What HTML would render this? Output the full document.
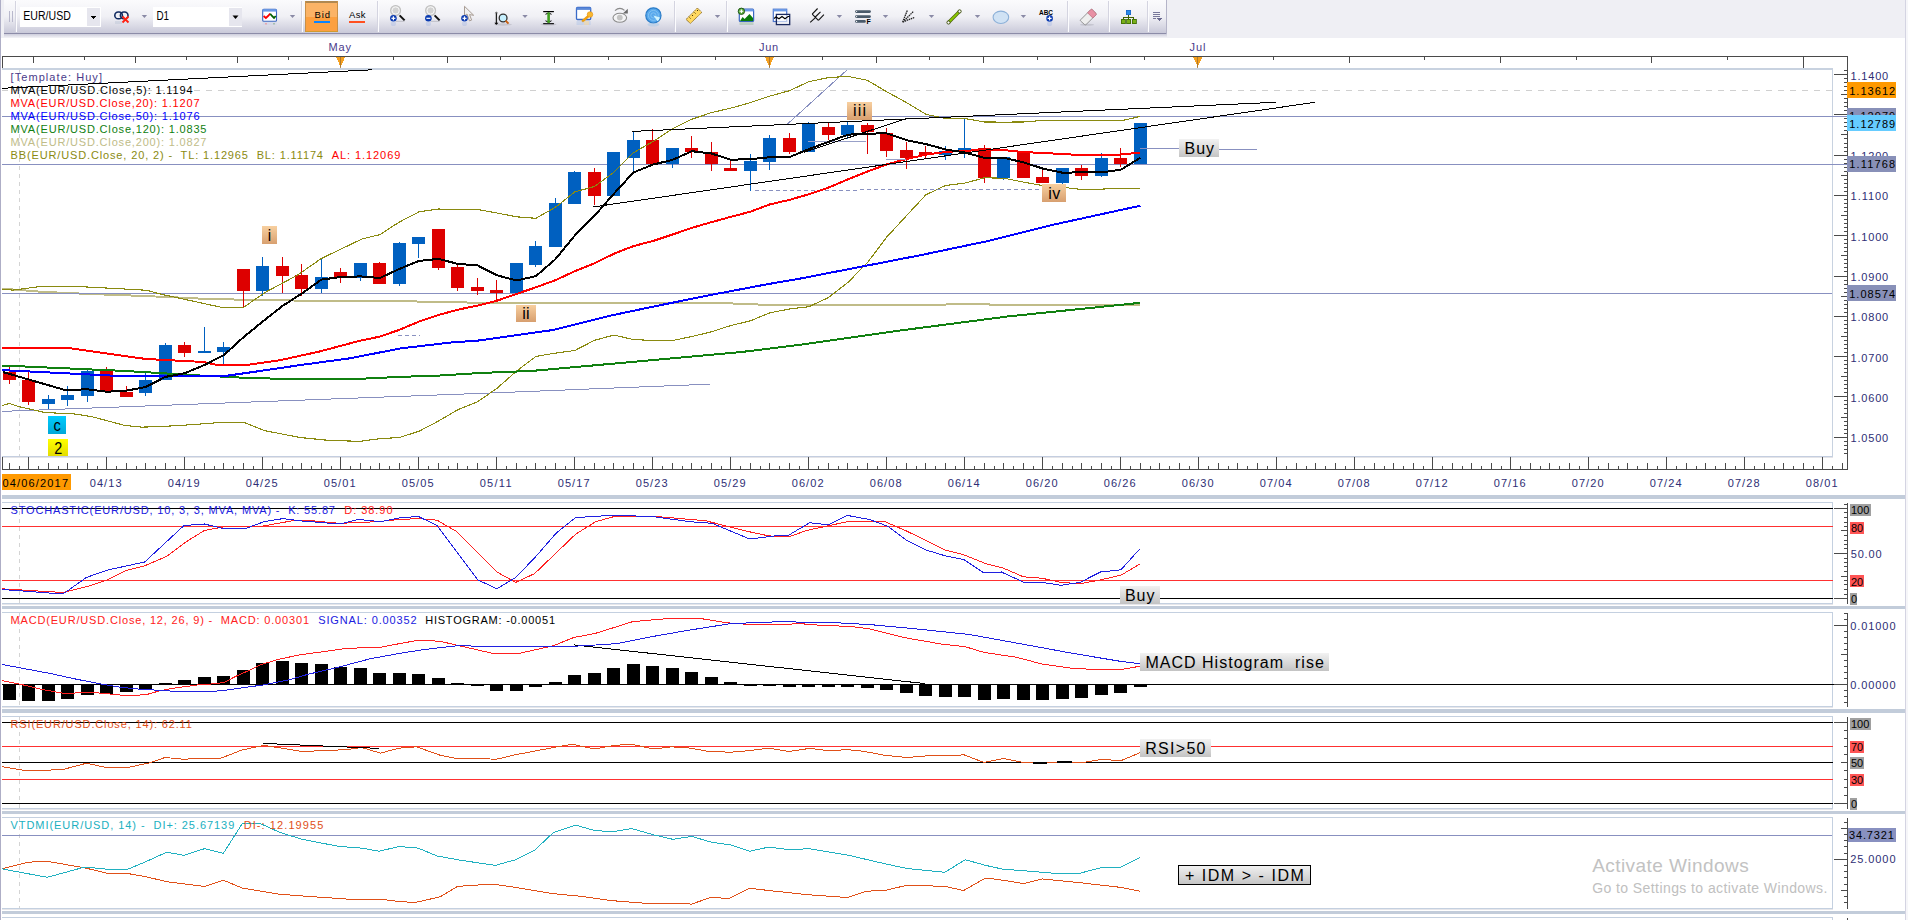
<!DOCTYPE html><html><head><meta charset="utf-8"><style>html,body{margin:0;padding:0;width:1908px;height:920px;overflow:hidden;background:#fff}svg{display:block}text{font-family:"Liberation Sans",sans-serif;white-space:pre}</style></head><body><svg width="1908" height="920" viewBox="0 0 1908 920" shape-rendering="crispEdges"><rect x="0.0" y="0.0" width="1908.0" height="920.0" fill="#ffffff" /><rect x="0.0" y="0.0" width="1908.0" height="38.0" fill="#efeff4" /><rect x="0.0" y="0.0" width="1.2" height="920.0" fill="#aeaec6" /><rect x="1905.0" y="0.0" width="1.0" height="920.0" fill="#d4d4e2" /><rect x="1906.0" y="0.0" width="2.0" height="920.0" fill="#f6f6f9" /><defs><linearGradient id="tb" x1="0" y1="0" x2="0" y2="1"><stop offset="0" stop-color="#fbfbfd"/><stop offset="0.5" stop-color="#f0f0f5"/><stop offset="1" stop-color="#c9c9d9"/></linearGradient><linearGradient id="lbl" x1="0" y1="0" x2="0" y2="1"><stop offset="0" stop-color="#f2f2f2"/><stop offset="1" stop-color="#c4c4c4"/></linearGradient><linearGradient id="wv" x1="0" y1="0" x2="0" y2="1"><stop offset="0" stop-color="#f8d0a0"/><stop offset="1" stop-color="#d8a070"/></linearGradient><linearGradient id="cy" x1="0" y1="0" x2="0" y2="1"><stop offset="0" stop-color="#00ccff"/><stop offset="1" stop-color="#00a8d8"/></linearGradient><linearGradient id="yl" x1="0" y1="0" x2="0" y2="1"><stop offset="0" stop-color="#ffff00"/><stop offset="1" stop-color="#e4dc00"/></linearGradient><clipPath id="clp"><rect x="2" y="0" width="1831" height="920"/></clipPath><linearGradient id="shd" x1="0" y1="0" x2="0" y2="1"><stop offset="0" stop-color="#c8c8d8"/><stop offset="1" stop-color="#efeff4"/></linearGradient></defs><rect x="4.0" y="33.5" width="1163.0" height="4.0" fill="url(#shd)" /><rect x="4.0" y="0.0" width="1163.0" height="33.0" fill="url(#tb)" /><rect x="4.0" y="33.0" width="1163.0" height="1.0" fill="#8c8ca8" /><rect x="1166.0" y="0.0" width="1.0" height="34.0" fill="#b4b4c8" /><rect x="7.5" y="11.0" width="0.8" height="11.0" fill="#b8b8cc" /><rect x="9.0" y="11.0" width="0.8" height="11.0" fill="#b8b8cc" /><rect x="10.5" y="11.0" width="0.8" height="11.0" fill="#b8b8cc" /><rect x="12.0" y="11.0" width="0.8" height="11.0" fill="#b8b8cc" /><rect x="15.0" y="1.0" width="1.0" height="31.0" fill="#d4d4e0" /><rect x="16.0" y="1.0" width="1.0" height="31.0" fill="#fcfcfe" /><rect x="20.0" y="7.0" width="81.0" height="20.0" fill="#ffffff" /><rect x="87.0" y="8.0" width="13.0" height="18.0" fill="#e6e6ee" /><path d="M90.5,15.5 L96.5,15.5 L93.5,19 Z" fill="#000"/><text x="23.3" y="20.3" fill="#000" font-size="12.5"  textLength="47.5" lengthAdjust="spacingAndGlyphs">EUR/USD</text><g shape-rendering="geometricPrecision"><g fill="none" stroke="#102a60" stroke-width="1.6"><rect x="114.8" y="12" width="7.6" height="6.8" rx="3.4"/><rect x="120.4" y="12" width="7.6" height="6.8" rx="3.4"/></g><path d="M122.5,16.5 L128.5,22.5 M128.5,16.5 L122.5,22.5" stroke="#ff2010" stroke-width="1.8"/><rect x="115" y="21" width="7" height="3" fill="#c0c8d8" opacity="0.5"/><path d="M141.7,15 L147.1,15 L144.4,18 Z" fill="#8a8aa6"/><rect x="153.0" y="7.0" width="89.0" height="20.0" fill="#ffffff" /><rect x="229.0" y="8.0" width="13.0" height="18.0" fill="#e6e6ee" /><path d="M232.5,15.5 L238.5,15.5 L235.5,19 Z" fill="#000"/><text x="156.4" y="20.3" fill="#000" font-size="12.5"  textLength="12.6" lengthAdjust="spacingAndGlyphs">D1</text><rect x="262.7" y="9.3" width="13.8" height="12" rx="1" fill="#fff" stroke="#3a66c0" stroke-width="1.1"/><rect x="262.7" y="9.3" width="13.8" height="2.3" fill="#6a9ae8" /><polyline points="263.6,16 265.9,18 268,16 270.2,13.7" fill="none" stroke="#ff0000" stroke-width="1.8"/><polyline points="270.2,13.7 272,16 274,18 275.7,16" fill="none" stroke="#006000" stroke-width="1.8"/><g opacity="0.25"><rect x="262.7" y="22" width="13.8" height="3" fill="#c0c8e8"/><rect x="265" y="23" width="2" height="1.5" fill="#f00"/><rect x="273" y="23" width="2" height="1.5" fill="#060"/></g><path d="M289.8,15 L295.2,15 L292.5,18 Z" fill="#8a8aa6"/></g><rect x="301.0" y="1.0" width="1.0" height="31.0" fill="#d4d4e0" /><rect x="302.0" y="1.0" width="1.0" height="31.0" fill="#fcfcfe" /><rect x="305.0" y="1.0" width="33.0" height="31.0" fill="#fca040" /><rect x="305.0" y="1.0" width="33.0" height="16.0" fill="#fbb366" /><rect x="305.0" y="1.0" width="33.0" height="2.0" fill="#b08850" /><rect x="305.0" y="1.0" width="1.0" height="31.0" fill="#c89048" /><rect x="337.0" y="1.0" width="1.0" height="31.0" fill="#c89048" /><rect x="305.0" y="31.0" width="33.0" height="1.0" fill="#d09a30" /><text x="314.5" y="18.0" fill="#000" font-size="9.5"  textLength="15.5" lengthAdjust="spacing">Bid</text><rect x="314.0" y="21.0" width="16.0" height="2.0" fill="#0a84ff" /><text x="349.0" y="18.0" fill="#000" font-size="9.5"  textLength="16.5" lengthAdjust="spacing">Ask</text><rect x="349.0" y="21.0" width="16.0" height="2.0" fill="#ff5020" /><rect x="377.0" y="1.0" width="1.0" height="31.0" fill="#d4d4e0" /><rect x="378.0" y="1.0" width="1.0" height="31.0" fill="#fcfcfe" /><g shape-rendering="geometricPrecision"><circle cx="395.6" cy="10.5" r="5" fill="#d8d8d8" stroke="#c0c0c0" stroke-width="1.1"/><circle cx="395.6" cy="10.5" r="3.6" fill="#d2d2d2" stroke="#f8f8f8" stroke-width="0.9"/><line x1="399.6" y1="15.4" x2="404.6" y2="20.4" stroke="#101010" stroke-width="2"/><line x1="395.5" y1="21.3" x2="404.5" y2="21.3" stroke="#a0a0a8" stroke-width="0.8" opacity="0.7"/><circle cx="393.4" cy="18.3" r="3.3" fill="#0a3ab0" shape-rendering="geometricPrecision"/><rect x="391.4" y="17.7" width="4" height="1.2" fill="#fff" shape-rendering="geometricPrecision"/><rect x="392.8" y="16.3" width="1.2" height="4" fill="#fff" shape-rendering="geometricPrecision"/><circle cx="393.4" cy="23.5" r="2.6" fill="#7a9ae0" opacity="0.22"/><circle cx="430.6" cy="10.5" r="5" fill="#d8d8d8" stroke="#c0c0c0" stroke-width="1.1"/><circle cx="430.6" cy="10.5" r="3.6" fill="#d2d2d2" stroke="#f8f8f8" stroke-width="0.9"/><line x1="434.6" y1="15.4" x2="439.6" y2="20.4" stroke="#101010" stroke-width="2"/><line x1="430.5" y1="21.3" x2="439.5" y2="21.3" stroke="#a0a0a8" stroke-width="0.8" opacity="0.7"/><circle cx="428.4" cy="18.3" r="3.3" fill="#0a3ab0" shape-rendering="geometricPrecision"/><rect x="426.4" y="17.7" width="4" height="1.2" fill="#fff" shape-rendering="geometricPrecision"/><circle cx="428.4" cy="23.5" r="2.6" fill="#7a9ae0" opacity="0.22"/><path d="M464.5,6.3 L464.5,15.8 L467,14 L469.5,20.9 L471.6,20.1 L469.6,14.6 L473.7,15.3 Z" fill="#f0f0f0" stroke="#a89c94" stroke-width="1"/><circle cx="464.5" cy="18.3" r="3.3" fill="#0a3ab0" shape-rendering="geometricPrecision"/><rect x="462.5" y="17.7" width="4" height="1.2" fill="#fff" shape-rendering="geometricPrecision"/><rect x="463.9" y="16.3" width="1.2" height="4" fill="#fff" shape-rendering="geometricPrecision"/><circle cx="464.5" cy="23.5" r="2.6" fill="#7a9ae0" opacity="0.22"/><line x1="496.4" y1="12.5" x2="496.4" y2="24.3" stroke="#202020" stroke-width="1.3"/><path d="M494.6,13.3 L498.2,13.3 L496.4,11.5 Z" fill="#707070"/><path d="M494.4,22.8 L498.4,22.8 L496.4,25 Z" fill="#000"/><circle cx="503.1" cy="18" r="3.9" fill="#c6f0ff" stroke="#303030" stroke-width="1.3"/><line x1="505.6" y1="20.6" x2="508.5" y2="23.6" stroke="#c86010" stroke-width="2"/><ellipse cx="503" cy="24.5" rx="9" ry="1.2" fill="#909098" opacity="0.3"/><path d="M522.3,15 L527.7,15 L525.0,18 Z" fill="#8a8aa6"/><rect x="543.2" y="11" width="10.7" height="1.2" fill="#000"/><rect x="543.2" y="23" width="10.7" height="1.3" fill="#000"/><path d="M545.5,14.3 Q548.5,11.5 551.5,14.3 M545.5,20.8 Q548.5,23.5 551.5,20.8" fill="none" stroke="#000" stroke-width="1"/><rect x="547.3" y="12.4" width="2.6" height="10.5" fill="#40a020"/><ellipse cx="548.5" cy="24.3" rx="8" ry="1.3" fill="#909098" opacity="0.3"/><rect x="576.5" y="7.5" width="14.2" height="12" rx="1" fill="#fff" stroke="#3a6ac8" stroke-width="1.3"/><rect x="576.5" y="7.5" width="14.2" height="2.4" fill="#5a88d8" /><line x1="582.8" y1="21" x2="588.5" y2="16" stroke="#f0a010" stroke-width="2.4" stroke-linecap="round"/><circle cx="590" cy="14.5" r="2.8" fill="#f8b830" stroke="#e89010" stroke-width="0.6"/><g opacity="0.25"><rect x="576.5" y="21" width="14.2" height="4" fill="#8ab0e8"/><rect x="584" y="21" width="5" height="4" fill="#f8c040"/></g><ellipse cx="619.8" cy="17.8" rx="6.8" ry="4.5" fill="#f4f4f6" stroke="#8c8c8c" stroke-width="1.1"/><circle cx="619.8" cy="17.6" r="2.9" fill="#c4c4c4"/><path d="M615,10.6 Q619.8,6.4 624.5,10.4" fill="none" stroke="#8a8a8a" stroke-width="1.2"/><path d="M622.8,13.4 L627.8,8.8 L627.8,13.4 Z" fill="#6a6a6a"/><circle cx="653.4" cy="15.4" r="7.6" fill="#58a8ec" stroke="#2a7cc8" stroke-width="1.2"/><circle cx="653.4" cy="15.4" r="5" fill="none" stroke="#90ccf4" stroke-width="0.7"/><circle cx="653.4" cy="15.4" r="2.6" fill="none" stroke="#90ccf4" stroke-width="0.7"/><path d="M653.4,15.4 L660,17.5 A7,7 0 0 1 657.5,21.3 Z" fill="#d0f4ff"/><ellipse cx="653.4" cy="24.5" rx="6" ry="2" fill="#80b8e8" opacity="0.3"/></g><rect x="674.0" y="1.0" width="1.0" height="31.0" fill="#d4d4e0" /><rect x="675.0" y="1.0" width="1.0" height="31.0" fill="#fcfcfe" /><g shape-rendering="geometricPrecision"><path d="M697.4,8 L701.8,12.4 L690.4,23.5 L686,19.4 Z" fill="#ffd860" stroke="#705010" stroke-width="0.9" stroke-dasharray="1,0.6"/><path d="M689.5,17.5 l1,1 M692,15 l1,1 M694.5,12.5 l1,1 M697,10 l1,1" stroke="#302000" stroke-width="0.9"/><path d="M714.8,15 L720.2,15 L717.5,18 Z" fill="#8a8aa6"/></g><rect x="726.0" y="1.0" width="1.0" height="31.0" fill="#d4d4e0" /><rect x="727.0" y="1.0" width="1.0" height="31.0" fill="#fcfcfe" /><g shape-rendering="geometricPrecision"><rect x="739.3" y="9.2" width="14.3" height="12.3" rx="1" fill="#fff" stroke="#3a66c0" stroke-width="1.2"/><rect x="739.3" y="9.2" width="14.3" height="2.2" fill="#6a9ae8" /><path d="M740,21 L742.6,16.9 L744.6,19 L749.5,14 L753,18 L753,21 Z" fill="#0a7a0a"/><circle cx="741.4" cy="11.3" r="3.2" fill="#60b040" stroke="#1a5010" stroke-width="0.9"/><path d="M739.6,11.3 h3.6 M741.4,9.5 v3.6" stroke="#fff" stroke-width="1.1"/><rect x="739.5" y="22" width="14" height="3" fill="#70a870" opacity="0.3"/><rect x="773.3" y="9.2" width="13.4" height="12.3" fill="#fff" stroke="#4a74cc" stroke-width="1.2"/><rect x="773.3" y="9.2" width="13.4" height="2.2" fill="#6a9ae8" /><rect x="776.4" y="14.4" width="13.3" height="10.2" fill="#fff" fill-opacity="0.6" stroke="#1a2a60" stroke-width="1.3"/><polyline points="774,18.5 776,17 779,18.8 782,16.5 785,18.8 788,16.5 789.5,16.5" fill="none" stroke="#000" stroke-width="1.1"/><path d="M810.2,22.4 L815.7,17.3 M812.2,14.2 L818.4,20.4 M812.2,14.2 L817.6,8.5 M815.3,17 L820.5,11.9 M818.4,20.4 L823.9,14.6" fill="none" stroke="#101010" stroke-width="1.1"/><path d="M836.7,15 L842.1,15 L839.4,18 Z" fill="#8a8aa6"/><rect x="855.1" y="10.2" width="15.8" height="2.7" rx="1.3" fill="#4a5a6a"/><circle cx="856.6" cy="11.5" r="0.6" fill="#fff"/><rect x="855.1" y="15.2" width="15.8" height="2.7" rx="1.3" fill="#4a5a6a"/><circle cx="856.6" cy="16.6" r="0.6" fill="#fff"/><rect x="855.1" y="20.0" width="10.7" height="2.7" rx="1.3" fill="#4a5a6a"/><circle cx="856.6" cy="21.4" r="0.6" fill="#fff"/><text x="866.6" y="23.8" fill="#000" font-size="7" font-weight="bold">F</text><path d="M882.8,15 L888.2,15 L885.5,18 Z" fill="#8a8aa6"/><path d="M902.6,22.1 L907.4,10.2 M902.6,22.1 L913.7,11.2 M902.6,22.1 L914.7,17.3" fill="none" stroke="#202020" stroke-width="1.3" stroke-dasharray="1.5,0.7"/><path d="M928.8,15 L934.2,15 L931.5,18 Z" fill="#8a8aa6"/><line x1="948.5" y1="22.5" x2="959.6" y2="11.4" stroke="#506010" stroke-width="3.4"/><line x1="948.5" y1="22.5" x2="959.6" y2="11.4" stroke="#88c800" stroke-width="2"/><circle cx="948.5" cy="22.5" r="1.6" fill="#fff" stroke="#405010" stroke-width="1"/><circle cx="959.6" cy="11.4" r="1.6" fill="#fff" stroke="#405010" stroke-width="1"/><path d="M974.8,15 L980.2,15 L977.5,18 Z" fill="#8a8aa6"/><ellipse cx="1000.9" cy="17.3" rx="7.8" ry="6.2" fill="#d0e2f4" stroke="#8cb0d8" stroke-width="1.1"/><path d="M1020.7,15 L1026.1,15 L1023.4,18 Z" fill="#8a8aa6"/><text x="1039.0" y="15.0" fill="#000" font-size="8" font-weight="bold" textLength="14.0" lengthAdjust="spacingAndGlyphs">ABC</text><circle cx="1049.6" cy="18.4" r="3.3" fill="#0a3ab0" shape-rendering="geometricPrecision"/><rect x="1047.6" y="17.8" width="4" height="1.2" fill="#fff" shape-rendering="geometricPrecision"/><rect x="1049.0" y="16.4" width="1.2" height="4" fill="#fff" shape-rendering="geometricPrecision"/><circle cx="1049.6" cy="23.5" r="2.6" fill="#7a9ae0" opacity="0.22"/></g><rect x="1067.0" y="1.0" width="1.0" height="31.0" fill="#d4d4e0" /><rect x="1068.0" y="1.0" width="1.0" height="31.0" fill="#fcfcfe" /><g shape-rendering="geometricPrecision"><path d="M1080.6,19.8 L1090.8,9.6 Q1091.5,9 1092.2,9.6 L1096,13.4 Q1096.6,14.1 1096,14.8 L1086,24.6 Q1085.3,25.2 1084.6,24.6 L1080.6,21 Q1080,20.4 1080.6,19.8 Z" fill="#eeeeee" stroke="#8a8a8a" stroke-width="0.9"/><path d="M1087.6,12.8 L1090.8,9.6 Q1091.5,9 1092.2,9.6 L1096,13.4 Q1096.6,14.1 1096,14.8 L1092.8,18 Z" fill="#e890a4" stroke="#c07080" stroke-width="0.8"/><ellipse cx="1087" cy="24.8" rx="7" ry="1" fill="#909098" opacity="0.3"/></g><rect x="1108.0" y="1.0" width="1.0" height="31.0" fill="#d4d4e0" /><rect x="1109.0" y="1.0" width="1.0" height="31.0" fill="#fcfcfe" /><rect x="1126" y="10.1" width="4.8" height="4.6" rx="0.6" fill="#2a8ae8" stroke="#1a60c0" stroke-width="0.6"/><path d="M1128.4,14.7 V19.3 M1123.3,19.3 V17.2 H1133.7 V19.3" fill="none" stroke="#406000" stroke-width="1"/><rect x="1121.1" y="19.3" width="4.2" height="4.2" fill="#78b018" stroke="#3a6800" stroke-width="0.8"/><rect x="1126.7" y="19.3" width="4.2" height="4.2" fill="#78b018" stroke="#3a6800" stroke-width="0.8"/><rect x="1132.1" y="19.3" width="4.2" height="4.2" fill="#78b018" stroke="#3a6800" stroke-width="0.8"/><rect x="1147.0" y="1.0" width="1.0" height="31.0" fill="#d4d4e0" /><rect x="1148.0" y="1.0" width="1.0" height="31.0" fill="#fcfcfe" /><path d="M1153,12.5 h7 M1153,14.5 h7 M1153,16.5 h7 M1153,18.5 h3" stroke="#6a6a90" stroke-width="0.9"/><path d="M1157.2,18.2 L1161.8,18.2 L1159.5,20.9 Z" fill="#6a6a90"/><text x="328.4" y="51.0" fill="#4a3a8a" font-size="11"  textLength="22.6" lengthAdjust="spacing">May</text><text x="759.0" y="51.0" fill="#4a3a8a" font-size="11"  textLength="19.0" lengthAdjust="spacing">Jun</text><text x="1189.5" y="51.0" fill="#4a3a8a" font-size="11"  textLength="16.0" lengthAdjust="spacing">Jul</text><line x1="2.0" y1="56.5" x2="1848.0" y2="56.5" stroke="#4a4a4a" stroke-width="1" /><line x1="2.5" y1="56.0" x2="2.5" y2="69.5" stroke="#4a4a4a" stroke-width="1" /><line x1="1847.5" y1="56.0" x2="1847.5" y2="69.5" stroke="#4a4a4a" stroke-width="1" /><line x1="33.4" y1="56.5" x2="33.4" y2="62.5" stroke="#4a4a4a" stroke-width="1" /><line x1="84.7" y1="56.5" x2="84.7" y2="59.5" stroke="#4a4a4a" stroke-width="1" /><line x1="135.5" y1="56.5" x2="135.5" y2="62.5" stroke="#4a4a4a" stroke-width="1" /><line x1="186.8" y1="56.5" x2="186.8" y2="59.5" stroke="#4a4a4a" stroke-width="1" /><line x1="237.5" y1="56.5" x2="237.5" y2="62.5" stroke="#4a4a4a" stroke-width="1" /><line x1="288.8" y1="56.5" x2="288.8" y2="59.5" stroke="#4a4a4a" stroke-width="1" /><line x1="393.4" y1="56.5" x2="393.4" y2="59.5" stroke="#4a4a4a" stroke-width="1" /><line x1="447.2" y1="56.5" x2="447.2" y2="62.5" stroke="#4a4a4a" stroke-width="1" /><line x1="500.5" y1="56.5" x2="500.5" y2="59.5" stroke="#4a4a4a" stroke-width="1" /><line x1="554.3" y1="56.5" x2="554.3" y2="62.5" stroke="#4a4a4a" stroke-width="1" /><line x1="608.5" y1="56.5" x2="608.5" y2="59.5" stroke="#4a4a4a" stroke-width="1" /><line x1="661.4" y1="56.5" x2="661.4" y2="62.5" stroke="#4a4a4a" stroke-width="1" /><line x1="715.6" y1="56.5" x2="715.6" y2="59.5" stroke="#4a4a4a" stroke-width="1" /><line x1="822.7" y1="56.5" x2="822.7" y2="59.5" stroke="#4a4a4a" stroke-width="1" /><line x1="876.5" y1="56.5" x2="876.5" y2="62.5" stroke="#4a4a4a" stroke-width="1" /><line x1="929.3" y1="56.5" x2="929.3" y2="59.5" stroke="#4a4a4a" stroke-width="1" /><line x1="983.1" y1="56.5" x2="983.1" y2="62.5" stroke="#4a4a4a" stroke-width="1" /><line x1="1037.4" y1="56.5" x2="1037.4" y2="59.5" stroke="#4a4a4a" stroke-width="1" /><line x1="1090.7" y1="56.5" x2="1090.7" y2="62.5" stroke="#4a4a4a" stroke-width="1" /><line x1="1144.5" y1="56.5" x2="1144.5" y2="59.5" stroke="#4a4a4a" stroke-width="1" /><line x1="1273.3" y1="56.5" x2="1273.3" y2="59.5" stroke="#4a4a4a" stroke-width="1" /><line x1="1349.4" y1="56.5" x2="1349.4" y2="62.5" stroke="#4a4a4a" stroke-width="1" /><line x1="1424.5" y1="56.5" x2="1424.5" y2="59.5" stroke="#4a4a4a" stroke-width="1" /><line x1="1500.6" y1="56.5" x2="1500.6" y2="62.5" stroke="#4a4a4a" stroke-width="1" /><line x1="1576.7" y1="56.5" x2="1576.7" y2="59.5" stroke="#4a4a4a" stroke-width="1" /><line x1="1651.8" y1="56.5" x2="1651.8" y2="62.5" stroke="#4a4a4a" stroke-width="1" /><line x1="1727.4" y1="56.5" x2="1727.4" y2="59.5" stroke="#4a4a4a" stroke-width="1" /><line x1="1803.5" y1="56.5" x2="1803.5" y2="59.5" stroke="#4a4a4a" stroke-width="1" /><line x1="1803.5" y1="56.5" x2="1803.5" y2="68.0" stroke="#4a4a4a" stroke-width="1.1" /><path d="M336.1,57 L345.1,57 L340.6,67 Z" fill="#f4a020"/><line x1="340.6" y1="57.0" x2="340.6" y2="69.0" stroke="#a07030" stroke-width="0.8" /><path d="M764.9,57 L773.9,57 L769.4,67 Z" fill="#f4a020"/><line x1="769.4" y1="57.0" x2="769.4" y2="69.0" stroke="#a07030" stroke-width="0.8" /><path d="M1193.2,57 L1202.2,57 L1197.7,67 Z" fill="#f4a020"/><line x1="1197.7" y1="57.0" x2="1197.7" y2="69.0" stroke="#a07030" stroke-width="0.8" /><rect x="2.0" y="68.0" width="1831.0" height="2.0" fill="#c8d2e0" /><rect x="2.0" y="456.0" width="1831.0" height="1.0" fill="#c4cee0" /><rect x="2.0" y="457.0" width="1831.0" height="1.0" fill="#e4e4e8" /><rect x="1832.0" y="68.0" width="1.0" height="389.0" fill="#c8d2e0" /><line x1="1847.5" y1="69.0" x2="1847.5" y2="470.0" stroke="#4a4a4a" stroke-width="1" /><rect x="1843.5" y="70" width="4.5" height="1" fill="#4a4a4a"/><rect x="1833.5" y="74" width="14.5" height="1" fill="#4a4a4a"/><rect x="1843.5" y="78" width="4.5" height="1" fill="#4a4a4a"/><rect x="1843.5" y="82" width="4.5" height="1" fill="#4a4a4a"/><rect x="1843.5" y="86" width="4.5" height="1" fill="#4a4a4a"/><rect x="1843.5" y="90" width="4.5" height="1" fill="#4a4a4a"/><rect x="1840.5" y="94" width="7.5" height="1" fill="#4a4a4a"/><rect x="1843.5" y="98" width="4.5" height="1" fill="#4a4a4a"/><rect x="1843.5" y="102" width="4.5" height="1" fill="#4a4a4a"/><rect x="1843.5" y="106" width="4.5" height="1" fill="#4a4a4a"/><rect x="1843.5" y="110" width="4.5" height="1" fill="#4a4a4a"/><rect x="1833.5" y="114" width="14.5" height="1" fill="#4a4a4a"/><rect x="1843.5" y="118" width="4.5" height="1" fill="#4a4a4a"/><rect x="1843.5" y="122" width="4.5" height="1" fill="#4a4a4a"/><rect x="1843.5" y="126" width="4.5" height="1" fill="#4a4a4a"/><rect x="1843.5" y="130" width="4.5" height="1" fill="#4a4a4a"/><rect x="1840.5" y="134" width="7.5" height="1" fill="#4a4a4a"/><rect x="1843.5" y="138" width="4.5" height="1" fill="#4a4a4a"/><rect x="1843.5" y="143" width="4.5" height="1" fill="#4a4a4a"/><rect x="1843.5" y="147" width="4.5" height="1" fill="#4a4a4a"/><rect x="1843.5" y="151" width="4.5" height="1" fill="#4a4a4a"/><rect x="1833.5" y="155" width="14.5" height="1" fill="#4a4a4a"/><rect x="1843.5" y="159" width="4.5" height="1" fill="#4a4a4a"/><rect x="1843.5" y="163" width="4.5" height="1" fill="#4a4a4a"/><rect x="1843.5" y="167" width="4.5" height="1" fill="#4a4a4a"/><rect x="1843.5" y="171" width="4.5" height="1" fill="#4a4a4a"/><rect x="1840.5" y="175" width="7.5" height="1" fill="#4a4a4a"/><rect x="1843.5" y="179" width="4.5" height="1" fill="#4a4a4a"/><rect x="1843.5" y="183" width="4.5" height="1" fill="#4a4a4a"/><rect x="1843.5" y="187" width="4.5" height="1" fill="#4a4a4a"/><rect x="1843.5" y="191" width="4.5" height="1" fill="#4a4a4a"/><rect x="1833.5" y="195" width="14.5" height="1" fill="#4a4a4a"/><rect x="1843.5" y="199" width="4.5" height="1" fill="#4a4a4a"/><rect x="1843.5" y="203" width="4.5" height="1" fill="#4a4a4a"/><rect x="1843.5" y="207" width="4.5" height="1" fill="#4a4a4a"/><rect x="1843.5" y="211" width="4.5" height="1" fill="#4a4a4a"/><rect x="1840.5" y="215" width="7.5" height="1" fill="#4a4a4a"/><rect x="1843.5" y="219" width="4.5" height="1" fill="#4a4a4a"/><rect x="1843.5" y="223" width="4.5" height="1" fill="#4a4a4a"/><rect x="1843.5" y="227" width="4.5" height="1" fill="#4a4a4a"/><rect x="1843.5" y="231" width="4.5" height="1" fill="#4a4a4a"/><rect x="1833.5" y="235" width="14.5" height="1" fill="#4a4a4a"/><rect x="1843.5" y="239" width="4.5" height="1" fill="#4a4a4a"/><rect x="1843.5" y="243" width="4.5" height="1" fill="#4a4a4a"/><rect x="1843.5" y="247" width="4.5" height="1" fill="#4a4a4a"/><rect x="1843.5" y="251" width="4.5" height="1" fill="#4a4a4a"/><rect x="1840.5" y="255" width="7.5" height="1" fill="#4a4a4a"/><rect x="1843.5" y="259" width="4.5" height="1" fill="#4a4a4a"/><rect x="1843.5" y="263" width="4.5" height="1" fill="#4a4a4a"/><rect x="1843.5" y="267" width="4.5" height="1" fill="#4a4a4a"/><rect x="1843.5" y="271" width="4.5" height="1" fill="#4a4a4a"/><rect x="1833.5" y="276" width="14.5" height="1" fill="#4a4a4a"/><rect x="1843.5" y="280" width="4.5" height="1" fill="#4a4a4a"/><rect x="1843.5" y="284" width="4.5" height="1" fill="#4a4a4a"/><rect x="1843.5" y="288" width="4.5" height="1" fill="#4a4a4a"/><rect x="1843.5" y="292" width="4.5" height="1" fill="#4a4a4a"/><rect x="1840.5" y="296" width="7.5" height="1" fill="#4a4a4a"/><rect x="1843.5" y="300" width="4.5" height="1" fill="#4a4a4a"/><rect x="1843.5" y="304" width="4.5" height="1" fill="#4a4a4a"/><rect x="1843.5" y="308" width="4.5" height="1" fill="#4a4a4a"/><rect x="1843.5" y="312" width="4.5" height="1" fill="#4a4a4a"/><rect x="1833.5" y="316" width="14.5" height="1" fill="#4a4a4a"/><rect x="1843.5" y="320" width="4.5" height="1" fill="#4a4a4a"/><rect x="1843.5" y="324" width="4.5" height="1" fill="#4a4a4a"/><rect x="1843.5" y="328" width="4.5" height="1" fill="#4a4a4a"/><rect x="1843.5" y="332" width="4.5" height="1" fill="#4a4a4a"/><rect x="1840.5" y="336" width="7.5" height="1" fill="#4a4a4a"/><rect x="1843.5" y="340" width="4.5" height="1" fill="#4a4a4a"/><rect x="1843.5" y="344" width="4.5" height="1" fill="#4a4a4a"/><rect x="1843.5" y="348" width="4.5" height="1" fill="#4a4a4a"/><rect x="1843.5" y="352" width="4.5" height="1" fill="#4a4a4a"/><rect x="1833.5" y="356" width="14.5" height="1" fill="#4a4a4a"/><rect x="1843.5" y="360" width="4.5" height="1" fill="#4a4a4a"/><rect x="1843.5" y="364" width="4.5" height="1" fill="#4a4a4a"/><rect x="1843.5" y="368" width="4.5" height="1" fill="#4a4a4a"/><rect x="1843.5" y="372" width="4.5" height="1" fill="#4a4a4a"/><rect x="1840.5" y="376" width="7.5" height="1" fill="#4a4a4a"/><rect x="1843.5" y="380" width="4.5" height="1" fill="#4a4a4a"/><rect x="1843.5" y="384" width="4.5" height="1" fill="#4a4a4a"/><rect x="1843.5" y="388" width="4.5" height="1" fill="#4a4a4a"/><rect x="1843.5" y="392" width="4.5" height="1" fill="#4a4a4a"/><rect x="1833.5" y="396" width="14.5" height="1" fill="#4a4a4a"/><rect x="1843.5" y="400" width="4.5" height="1" fill="#4a4a4a"/><rect x="1843.5" y="404" width="4.5" height="1" fill="#4a4a4a"/><rect x="1843.5" y="408" width="4.5" height="1" fill="#4a4a4a"/><rect x="1843.5" y="413" width="4.5" height="1" fill="#4a4a4a"/><rect x="1840.5" y="417" width="7.5" height="1" fill="#4a4a4a"/><rect x="1843.5" y="421" width="4.5" height="1" fill="#4a4a4a"/><rect x="1843.5" y="425" width="4.5" height="1" fill="#4a4a4a"/><rect x="1843.5" y="429" width="4.5" height="1" fill="#4a4a4a"/><rect x="1843.5" y="433" width="4.5" height="1" fill="#4a4a4a"/><rect x="1833.5" y="437" width="14.5" height="1" fill="#4a4a4a"/><rect x="1843.5" y="441" width="4.5" height="1" fill="#4a4a4a"/><rect x="1843.5" y="445" width="4.5" height="1" fill="#4a4a4a"/><rect x="1843.5" y="449" width="4.5" height="1" fill="#4a4a4a"/><rect x="1843.5" y="453" width="4.5" height="1" fill="#4a4a4a"/><text x="1850.6" y="79.5" fill="#2e2e74" font-size="11"  textLength="37.6" lengthAdjust="spacing">1.1400</text><text x="1850.6" y="119.8" fill="#2e2e74" font-size="11"  textLength="37.6" lengthAdjust="spacing">1.1300</text><text x="1850.6" y="160.1" fill="#2e2e74" font-size="11"  textLength="37.6" lengthAdjust="spacing">1.1200</text><text x="1850.6" y="200.4" fill="#2e2e74" font-size="11"  textLength="37.6" lengthAdjust="spacing">1.1100</text><text x="1850.6" y="240.7" fill="#2e2e74" font-size="11"  textLength="37.6" lengthAdjust="spacing">1.1000</text><text x="1850.6" y="281.0" fill="#2e2e74" font-size="11"  textLength="37.6" lengthAdjust="spacing">1.0900</text><text x="1850.6" y="321.3" fill="#2e2e74" font-size="11"  textLength="37.6" lengthAdjust="spacing">1.0800</text><text x="1850.6" y="361.6" fill="#2e2e74" font-size="11"  textLength="37.6" lengthAdjust="spacing">1.0700</text><text x="1850.6" y="401.9" fill="#2e2e74" font-size="11"  textLength="37.6" lengthAdjust="spacing">1.0600</text><text x="1850.6" y="442.2" fill="#2e2e74" font-size="11"  textLength="37.6" lengthAdjust="spacing">1.0500</text><polyline points="2.0,288.6 41.9,291.8 88.0,293.9 125.8,295.3 167.7,297.0 209.6,299.1 299.8,300.6 400.0,301.2 460.0,302.3 500.0,303.4 730.0,303.4 760.0,304.6 946.0,304.6 950.0,303.5 985.0,303.5 990.0,304.6 1140.0,304.6" fill="none" stroke="#c0bc88" stroke-width="2" stroke-linejoin="round" clip-path="url(#clp)" /><line x1="2.0" y1="90.5" x2="1833.0" y2="90.5" stroke="#d0d0d0" stroke-width="1" stroke-dasharray="6,6"/><line x1="2.0" y1="116.4" x2="1847.0" y2="116.4" stroke="#8890c0" stroke-width="1" /><line x1="2.0" y1="164.2" x2="1847.0" y2="164.2" stroke="#8890c0" stroke-width="1" /><line x1="2.0" y1="293.5" x2="1832.0" y2="293.5" stroke="#8890c0" stroke-width="1" /><rect x="1847.0" y="82.0" width="49.0" height="16.0" fill="#ff9900" /><text x="1849.2" y="94.5" fill="#000" font-size="11"  textLength="46.0" lengthAdjust="spacing">1.13612</text><rect x="1847.0" y="107.5" width="49.0" height="16.0" fill="#8890b8" /><text x="1849.2" y="120.0" fill="#000" font-size="11"  textLength="46.0" lengthAdjust="spacing">1.12979</text><rect x="1847.0" y="115.0" width="49.0" height="16.0" fill="#66ccff" /><text x="1849.2" y="127.5" fill="#000" font-size="11"  textLength="46.0" lengthAdjust="spacing">1.12789</text><rect x="1847.0" y="156.0" width="49.0" height="15.5" fill="#8890b8" /><text x="1849.2" y="168.0" fill="#000" font-size="11"  textLength="46.0" lengthAdjust="spacing">1.11768</text><rect x="1847.0" y="285.0" width="49.0" height="16.0" fill="#8890b8" /><text x="1849.2" y="297.5" fill="#000" font-size="11"  textLength="46.0" lengthAdjust="spacing">1.08574</text><line x1="19.5" y1="70.0" x2="19.5" y2="456.0" stroke="#d4d4d4" stroke-width="1" stroke-dasharray="4,4"/><line x1="19.5" y1="503.0" x2="19.5" y2="603.0" stroke="#d4d4d4" stroke-width="1" stroke-dasharray="4,4"/><line x1="19.5" y1="613.0" x2="19.5" y2="706.0" stroke="#d4d4d4" stroke-width="1" stroke-dasharray="4,4"/><line x1="19.5" y1="716.0" x2="19.5" y2="808.0" stroke="#d4d4d4" stroke-width="1" stroke-dasharray="4,4"/><line x1="19.5" y1="818.0" x2="19.5" y2="908.0" stroke="#d4d4d4" stroke-width="1" stroke-dasharray="4,4"/><rect x="9" y="367" width="1" height="17" fill="#dd0000"/><rect x="3" y="372" width="13" height="8" fill="#dd0000"/><rect x="28" y="372" width="1" height="33" fill="#dd0000"/><rect x="22" y="380" width="13" height="22" fill="#dd0000"/><rect x="48" y="395" width="1" height="14" fill="#0060c0"/><rect x="42" y="399" width="13" height="5" fill="#0060c0"/><rect x="67" y="386" width="1" height="20" fill="#0060c0"/><rect x="61" y="395" width="13" height="5" fill="#0060c0"/><rect x="87" y="368" width="1" height="34" fill="#0060c0"/><rect x="81" y="371" width="13" height="25" fill="#0060c0"/><rect x="106" y="367" width="1" height="25" fill="#dd0000"/><rect x="100" y="371" width="13" height="21" fill="#dd0000"/><rect x="126" y="386" width="1" height="11" fill="#dd0000"/><rect x="120" y="392" width="13" height="5" fill="#dd0000"/><rect x="145" y="371" width="1" height="25" fill="#0060c0"/><rect x="139" y="380" width="13" height="13" fill="#0060c0"/><rect x="165" y="343" width="1" height="37" fill="#0060c0"/><rect x="159" y="345" width="13" height="35" fill="#0060c0"/><rect x="184" y="342" width="1" height="15" fill="#dd0000"/><rect x="178" y="345" width="13" height="8" fill="#dd0000"/><rect x="204" y="327" width="1" height="26" fill="#0060c0"/><rect x="198" y="351" width="13" height="2" fill="#0060c0"/><rect x="223" y="342" width="1" height="22" fill="#0060c0"/><rect x="217" y="347" width="13" height="5" fill="#0060c0"/><rect x="243" y="269" width="1" height="38" fill="#dd0000"/><rect x="237" y="269" width="13" height="22" fill="#dd0000"/><rect x="262" y="257" width="1" height="39" fill="#0060c0"/><rect x="256" y="266" width="13" height="25" fill="#0060c0"/><rect x="282" y="257" width="1" height="36" fill="#dd0000"/><rect x="276" y="266" width="13" height="10" fill="#dd0000"/><rect x="301" y="264" width="1" height="32" fill="#dd0000"/><rect x="295" y="275" width="13" height="14" fill="#dd0000"/><rect x="321" y="258" width="1" height="35" fill="#0060c0"/><rect x="315" y="277" width="13" height="12" fill="#0060c0"/><rect x="340" y="268" width="1" height="15" fill="#dd0000"/><rect x="334" y="272" width="13" height="6" fill="#dd0000"/><rect x="360" y="263" width="1" height="18" fill="#0060c0"/><rect x="354" y="263" width="13" height="15" fill="#0060c0"/><rect x="379" y="262" width="1" height="22" fill="#dd0000"/><rect x="373" y="263" width="13" height="21" fill="#dd0000"/><rect x="399" y="242" width="1" height="44" fill="#0060c0"/><rect x="393" y="243" width="13" height="41" fill="#0060c0"/><rect x="418" y="237" width="1" height="21" fill="#0060c0"/><rect x="412" y="237" width="13" height="7" fill="#0060c0"/><rect x="438" y="229" width="1" height="41" fill="#dd0000"/><rect x="432" y="229" width="13" height="39" fill="#dd0000"/><rect x="457" y="265" width="1" height="26" fill="#dd0000"/><rect x="451" y="267" width="13" height="21" fill="#dd0000"/><rect x="477" y="278" width="1" height="17" fill="#dd0000"/><rect x="471" y="287" width="13" height="4" fill="#dd0000"/><rect x="496" y="280" width="1" height="20" fill="#dd0000"/><rect x="490" y="290" width="13" height="3" fill="#dd0000"/><rect x="516" y="263" width="1" height="30" fill="#0060c0"/><rect x="510" y="263" width="13" height="30" fill="#0060c0"/><rect x="535" y="241" width="1" height="26" fill="#0060c0"/><rect x="529" y="246" width="13" height="19" fill="#0060c0"/><rect x="555" y="198" width="1" height="49" fill="#0060c0"/><rect x="549" y="203" width="13" height="44" fill="#0060c0"/><rect x="574" y="171" width="1" height="33" fill="#0060c0"/><rect x="568" y="172" width="13" height="32" fill="#0060c0"/><rect x="594" y="168" width="1" height="37" fill="#dd0000"/><rect x="588" y="172" width="13" height="24" fill="#dd0000"/><rect x="613" y="152" width="1" height="44" fill="#0060c0"/><rect x="607" y="152" width="13" height="44" fill="#0060c0"/><rect x="633" y="131" width="1" height="41" fill="#0060c0"/><rect x="627" y="140" width="13" height="18" fill="#0060c0"/><rect x="652" y="129" width="1" height="35" fill="#dd0000"/><rect x="646" y="140" width="13" height="24" fill="#dd0000"/><rect x="672" y="148" width="1" height="20" fill="#0060c0"/><rect x="666" y="148" width="13" height="16" fill="#0060c0"/><rect x="691" y="136" width="1" height="22" fill="#dd0000"/><rect x="685" y="148" width="13" height="4" fill="#dd0000"/><rect x="711" y="142" width="1" height="29" fill="#dd0000"/><rect x="705" y="152" width="13" height="12" fill="#dd0000"/><rect x="730" y="159" width="1" height="12" fill="#dd0000"/><rect x="724" y="168" width="13" height="3" fill="#dd0000"/><rect x="750" y="154" width="1" height="37" fill="#0060c0"/><rect x="744" y="161" width="13" height="10" fill="#0060c0"/><rect x="769" y="135" width="1" height="35" fill="#0060c0"/><rect x="763" y="138" width="13" height="24" fill="#0060c0"/><rect x="789" y="133" width="1" height="21" fill="#dd0000"/><rect x="783" y="138" width="13" height="14" fill="#dd0000"/><rect x="808" y="122" width="1" height="30" fill="#0060c0"/><rect x="802" y="124" width="13" height="28" fill="#0060c0"/><rect x="828" y="123" width="1" height="17" fill="#dd0000"/><rect x="822" y="127" width="13" height="8" fill="#dd0000"/><rect x="847" y="122" width="1" height="17" fill="#0060c0"/><rect x="841" y="125" width="13" height="10" fill="#0060c0"/><rect x="867" y="123" width="1" height="31" fill="#dd0000"/><rect x="861" y="125" width="13" height="7" fill="#dd0000"/><rect x="886" y="128" width="1" height="29" fill="#dd0000"/><rect x="880" y="133" width="13" height="18" fill="#dd0000"/><rect x="906" y="142" width="1" height="27" fill="#dd0000"/><rect x="900" y="150" width="13" height="8" fill="#dd0000"/><rect x="925" y="146" width="1" height="13" fill="#dd0000"/><rect x="919" y="152" width="13" height="3" fill="#dd0000"/><rect x="945" y="146" width="1" height="14" fill="#0060c0"/><rect x="939" y="151" width="13" height="4" fill="#0060c0"/><rect x="964" y="118" width="1" height="40" fill="#0060c0"/><rect x="958" y="148" width="13" height="3" fill="#0060c0"/><rect x="984" y="145" width="1" height="38" fill="#dd0000"/><rect x="978" y="148" width="13" height="30" fill="#dd0000"/><rect x="1003" y="157" width="1" height="23" fill="#0060c0"/><rect x="997" y="157" width="13" height="21" fill="#0060c0"/><rect x="1023" y="152" width="1" height="26" fill="#dd0000"/><rect x="1017" y="152" width="13" height="26" fill="#dd0000"/><rect x="1042" y="169" width="1" height="14" fill="#dd0000"/><rect x="1036" y="177" width="13" height="6" fill="#dd0000"/><rect x="1062" y="168" width="1" height="16" fill="#0060c0"/><rect x="1056" y="168" width="13" height="15" fill="#0060c0"/><rect x="1081" y="165" width="1" height="15" fill="#dd0000"/><rect x="1075" y="168" width="13" height="8" fill="#dd0000"/><rect x="1101" y="153" width="1" height="24" fill="#0060c0"/><rect x="1095" y="158" width="13" height="18" fill="#0060c0"/><rect x="1120" y="148" width="1" height="19" fill="#dd0000"/><rect x="1114" y="158" width="13" height="6" fill="#dd0000"/><rect x="1140" y="123" width="1" height="41" fill="#0060c0"/><rect x="1134" y="123" width="13" height="41" fill="#0060c0"/><line x1="480.0" y1="393.4" x2="709.5" y2="384.2" stroke="#8890c0" stroke-width="1" /><line x1="2.0" y1="411.4" x2="480.0" y2="393.4" stroke="#8890c0" stroke-width="1" /><line x1="787.5" y1="124.0" x2="847.0" y2="70.0" stroke="#8890c0" stroke-width="1" /><line x1="2.0" y1="88.3" x2="371.7" y2="69.8" stroke="#000" stroke-width="1" /><polyline points="2.0,289.3 12.6,290.1 44.0,286.1 77.6,286.5 117.4,288.6 146.8,290.3 161.4,294.3 222.2,307.5 243.2,307.5 266.2,291.8 297.7,275.0 321.3,258.5 362.0,239.0 379.9,234.6 399.4,222.0 418.9,211.9 438.4,209.0 457.9,209.6 477.4,209.4 496.9,213.0 516.4,216.8 535.9,218.3 555.4,207.3 574.9,191.9 594.4,186.5 613.9,172.3 633.4,152.8 652.9,141.6 672.4,128.7 691.9,119.2 711.4,112.6 730.9,108.1 750.4,102.6 769.9,96.1 789.4,90.7 808.9,81.7 828.4,77.6 847.9,76.4 867.4,80.3 886.9,91.9 906.4,102.5 925.9,114.3 945.4,118.5 964.9,118.5 984.4,122.0 1003.9,122.1 1023.4,122.0 1042.9,120.4 1062.4,120.8 1081.9,120.7 1101.4,120.6 1120.9,120.8 1140.4,116.4" fill="none" stroke="#8a8a10" stroke-width="1.1" stroke-linejoin="round" clip-path="url(#clp)" /><polyline points="2.0,405.5 9.2,403.5 19.7,406.8 45.9,412.7 72.0,413.6 91.7,416.6 124.5,425.4 141.5,427.1 154.7,426.8 174.3,425.8 194.0,424.5 222.8,422.3 243.8,422.3 265.0,430.7 300.0,437.5 330.0,440.5 360.0,441.3 379.9,438.7 399.4,437.5 418.9,431.3 438.4,421.1 457.9,409.7 477.4,401.9 496.9,388.4 516.4,371.2 535.9,356.4 555.4,353.1 574.9,350.5 594.4,340.3 613.9,335.1 633.4,339.5 652.9,340.5 672.4,340.6 691.9,336.5 711.4,331.8 730.9,325.5 750.4,320.8 769.9,312.8 789.4,309.0 808.9,306.7 828.4,297.6 847.9,282.4 867.4,262.7 886.9,236.9 906.4,215.8 925.9,194.8 945.4,185.5 964.9,183.1 984.4,177.8 1003.9,178.2 1023.4,182.1 1042.9,185.6 1062.4,187.2 1081.9,189.6 1101.4,189.1 1120.9,188.3 1140.4,188.8" fill="none" stroke="#8a8a10" stroke-width="1.1" stroke-linejoin="round" clip-path="url(#clp)" /><line x1="755.0" y1="190.2" x2="1062.0" y2="189.6" stroke="#8890c0" stroke-width="1" stroke-dasharray="4,3"/><line x1="398.0" y1="335.0" x2="420.0" y2="335.0" stroke="#8890c0" stroke-width="1" stroke-dasharray="4,3"/><polyline points="0.0,365.4 126.0,371.0 200.0,375.5 245.0,377.8 280.0,378.8 360.0,378.8 400.0,376.9 440.0,375.5 480.0,373.0 532.2,370.9 610.4,363.9 688.7,356.8 740.8,352.1 800.0,344.8 898.7,330.7 1007.4,316.5 1140.4,302.8" fill="none" stroke="#108010" stroke-width="2" stroke-linejoin="round" clip-path="url(#clp)" /><polyline points="0.0,370.0 120.0,376.0 200.0,376.5 225.0,376.0 260.0,371.0 300.0,365.1 350.0,358.3 400.0,348.5 450.0,342.6 480.0,340.4 553.0,330.0 610.4,315.6 662.6,304.7 714.7,294.2 766.9,284.3 800.0,278.6 920.4,255.2 985.7,241.5 1050.9,225.2 1140.4,205.7" fill="none" stroke="#0000ff" stroke-width="2" stroke-linejoin="round" clip-path="url(#clp)" /><polyline points="0.0,347.7 68.0,348.0 146.0,359.0 204.0,362.0 215.0,364.5 250.0,364.5 280.0,360.2 320.0,351.4 360.0,340.7 379.9,336.6 399.4,329.8 418.9,321.6 438.4,315.0 457.9,309.7 477.4,305.6 496.9,300.7 516.4,294.0 535.9,287.3 555.4,280.2 574.9,271.2 594.4,263.4 613.9,253.7 633.4,246.1 652.9,241.0 672.4,234.6 691.9,227.8 711.4,222.2 730.9,216.8 750.4,211.7 769.9,204.4 789.4,199.9 808.9,194.2 828.4,187.6 847.9,179.4 867.4,171.5 886.9,164.4 906.4,159.1 925.9,154.6 945.4,152.0 964.9,150.8 984.4,149.9 1003.9,150.1 1023.4,152.0 1042.9,153.0 1062.4,154.0 1081.9,155.2 1101.4,154.9 1120.9,154.5 1140.4,152.6" fill="none" stroke="#ff0000" stroke-width="2" stroke-linejoin="round" clip-path="url(#clp)" /><line x1="808.0" y1="141.3" x2="866.0" y2="141.3" stroke="#98a0c8" stroke-width="1" /><line x1="886.0" y1="160.0" x2="906.0" y2="159.6" stroke="#98a0c8" stroke-width="1" /><line x1="632.5" y1="131.4" x2="1275.9" y2="102.3" stroke="#000" stroke-width="1" /><line x1="593.5" y1="206.9" x2="1315.0" y2="102.3" stroke="#000" stroke-width="1" /><line x1="804.0" y1="152.4" x2="906.0" y2="118.6" stroke="#000" stroke-width="1" /><polyline points="2.7,372.0 65.0,390.0 87.4,389.3 106.9,391.7 126.4,390.7 145.9,386.9 165.4,376.9 184.9,373.2 204.4,365.0 223.9,355.1 243.4,337.3 262.9,321.4 282.4,306.0 301.9,293.5 321.4,279.6 340.9,277.0 360.4,276.4 379.9,278.0 399.4,268.9 418.9,260.9 438.4,258.9 457.9,263.9 477.4,265.3 496.9,275.3 516.4,280.5 535.9,276.1 555.4,259.2 574.9,235.4 594.4,215.9 613.9,193.7 633.4,172.5 652.9,164.6 672.4,159.9 691.9,151.2 711.4,153.5 730.9,159.7 750.4,159.2 769.9,157.2 789.4,157.1 808.9,149.1 828.4,141.9 847.9,134.7 867.4,133.6 886.9,133.4 906.4,140.1 925.9,144.1 945.4,149.4 964.9,152.5 984.4,157.9 1003.9,157.8 1023.4,162.3 1042.9,168.6 1062.4,172.7 1081.9,172.3 1101.4,172.5 1120.9,169.7 1140.4,157.7" fill="none" stroke="#000" stroke-width="2" stroke-linejoin="round" clip-path="url(#clp)" /><line x1="1140.0" y1="148.5" x2="1179.0" y2="148.5" stroke="#8890c0" stroke-width="1" /><line x1="1219.0" y1="149.4" x2="1257.0" y2="149.4" stroke="#8890c0" stroke-width="1" /><rect x="1179.0" y="139.0" width="40.0" height="18.0" fill="url(#lbl)" /><text x="1184.6" y="154.0" fill="#000" font-size="16"  textLength="29.4" lengthAdjust="spacing">Buy</text><rect x="262.0" y="226.0" width="15.0" height="18.0" fill="url(#wv)" /><text x="267.8" y="240.5" fill="#000" font-size="16"  textLength="3.4" lengthAdjust="spacingAndGlyphs">i</text><rect x="516.0" y="304.5" width="20.0" height="17.0" fill="url(#wv)" /><text x="522.2" y="318.7" fill="#000" font-size="16"  textLength="7.4" lengthAdjust="spacing">ii</text><rect x="847.0" y="102.0" width="25.0" height="17.7" fill="url(#wv)" /><text x="853.0" y="115.6" fill="#000" font-size="16"  textLength="13.0" lengthAdjust="spacing">iii</text><rect x="1042.0" y="184.0" width="24.0" height="17.7" fill="url(#wv)" /><text x="1048.3" y="198.8" fill="#000" font-size="16"  textLength="12.0" lengthAdjust="spacing">iv</text><rect x="48.0" y="416.0" width="18.0" height="18.0" fill="url(#cy)" /><text x="53.6" y="430.9" fill="#000" font-size="16"  textLength="7.3" lengthAdjust="spacingAndGlyphs">c</text><rect x="48.0" y="439.0" width="20.0" height="17.0" fill="url(#yl)" /><text x="54.2" y="453.9" fill="#000" font-size="16"  textLength="8.0" lengthAdjust="spacingAndGlyphs">2</text><text x="10.5" y="81.0" fill="#4a3a8a" font-size="11"  textLength="91.5" lengthAdjust="spacing">[Template: Huy]</text><text x="10.5" y="94.0" fill="#000" font-size="11"  textLength="182.0" lengthAdjust="spacing">MVA(EUR/USD.Close,5): 1.1194</text><text x="10.5" y="107.0" fill="#ff0000" font-size="11"  textLength="189.0" lengthAdjust="spacing">MVA(EUR/USD.Close,20): 1.1207</text><text x="10.5" y="120.0" fill="#0000ff" font-size="11"  textLength="189.0" lengthAdjust="spacing">MVA(EUR/USD.Close,50): 1.1076</text><text x="10.5" y="133.0" fill="#108010" font-size="11"  textLength="196.0" lengthAdjust="spacing">MVA(EUR/USD.Close,120): 1.0835</text><text x="10.5" y="146.0" fill="#c0bc88" font-size="11"  textLength="196.0" lengthAdjust="spacing">MVA(EUR/USD.Close,200): 1.0827</text><text x="10.5" y="159.0" fill="#8a8a10" font-size="11"  textLength="312.5" lengthAdjust="spacing">BB(EUR/USD.Close, 20, 2) -  TL: 1.12965  BL: 1.11174</text><text x="331.8" y="159.0" fill="#ff0000" font-size="11"  textLength="68.5" lengthAdjust="spacing">AL: 1.12069</text><line x1="2.0" y1="469.5" x2="1848.0" y2="469.5" stroke="#4a4a4a" stroke-width="1" /><line x1="2.5" y1="457.0" x2="2.5" y2="470.0" stroke="#4a4a4a" stroke-width="1" /><line x1="9.4" y1="463.0" x2="9.4" y2="469.5" stroke="#4a4a4a" stroke-width="1" /><line x1="19.1" y1="466.0" x2="19.1" y2="469.5" stroke="#4a4a4a" stroke-width="1" /><line x1="28.9" y1="456.5" x2="28.9" y2="469.5" stroke="#4a4a4a" stroke-width="1.1" /><line x1="38.6" y1="466.0" x2="38.6" y2="469.5" stroke="#4a4a4a" stroke-width="1" /><line x1="48.4" y1="463.0" x2="48.4" y2="469.5" stroke="#4a4a4a" stroke-width="1" /><line x1="58.1" y1="466.0" x2="58.1" y2="469.5" stroke="#4a4a4a" stroke-width="1" /><line x1="67.9" y1="463.0" x2="67.9" y2="469.5" stroke="#4a4a4a" stroke-width="1" /><line x1="77.7" y1="466.0" x2="77.7" y2="469.5" stroke="#4a4a4a" stroke-width="1" /><line x1="87.4" y1="463.0" x2="87.4" y2="469.5" stroke="#4a4a4a" stroke-width="1" /><line x1="97.2" y1="466.0" x2="97.2" y2="469.5" stroke="#4a4a4a" stroke-width="1" /><line x1="106.9" y1="456.5" x2="106.9" y2="469.5" stroke="#4a4a4a" stroke-width="1.1" /><line x1="116.7" y1="466.0" x2="116.7" y2="469.5" stroke="#4a4a4a" stroke-width="1" /><line x1="126.4" y1="463.0" x2="126.4" y2="469.5" stroke="#4a4a4a" stroke-width="1" /><line x1="136.2" y1="466.0" x2="136.2" y2="469.5" stroke="#4a4a4a" stroke-width="1" /><line x1="145.9" y1="463.0" x2="145.9" y2="469.5" stroke="#4a4a4a" stroke-width="1" /><line x1="155.7" y1="466.0" x2="155.7" y2="469.5" stroke="#4a4a4a" stroke-width="1" /><line x1="165.4" y1="463.0" x2="165.4" y2="469.5" stroke="#4a4a4a" stroke-width="1" /><line x1="175.2" y1="466.0" x2="175.2" y2="469.5" stroke="#4a4a4a" stroke-width="1" /><line x1="184.9" y1="456.5" x2="184.9" y2="469.5" stroke="#4a4a4a" stroke-width="1.1" /><line x1="194.7" y1="466.0" x2="194.7" y2="469.5" stroke="#4a4a4a" stroke-width="1" /><line x1="204.4" y1="463.0" x2="204.4" y2="469.5" stroke="#4a4a4a" stroke-width="1" /><line x1="214.2" y1="466.0" x2="214.2" y2="469.5" stroke="#4a4a4a" stroke-width="1" /><line x1="223.9" y1="463.0" x2="223.9" y2="469.5" stroke="#4a4a4a" stroke-width="1" /><line x1="233.7" y1="466.0" x2="233.7" y2="469.5" stroke="#4a4a4a" stroke-width="1" /><line x1="243.4" y1="463.0" x2="243.4" y2="469.5" stroke="#4a4a4a" stroke-width="1" /><line x1="253.2" y1="466.0" x2="253.2" y2="469.5" stroke="#4a4a4a" stroke-width="1" /><line x1="262.9" y1="456.5" x2="262.9" y2="469.5" stroke="#4a4a4a" stroke-width="1.1" /><line x1="272.6" y1="466.0" x2="272.6" y2="469.5" stroke="#4a4a4a" stroke-width="1" /><line x1="282.4" y1="463.0" x2="282.4" y2="469.5" stroke="#4a4a4a" stroke-width="1" /><line x1="292.1" y1="466.0" x2="292.1" y2="469.5" stroke="#4a4a4a" stroke-width="1" /><line x1="301.9" y1="463.0" x2="301.9" y2="469.5" stroke="#4a4a4a" stroke-width="1" /><line x1="311.6" y1="466.0" x2="311.6" y2="469.5" stroke="#4a4a4a" stroke-width="1" /><line x1="321.4" y1="463.0" x2="321.4" y2="469.5" stroke="#4a4a4a" stroke-width="1" /><line x1="331.1" y1="466.0" x2="331.1" y2="469.5" stroke="#4a4a4a" stroke-width="1" /><line x1="340.9" y1="456.5" x2="340.9" y2="469.5" stroke="#4a4a4a" stroke-width="1.1" /><line x1="350.6" y1="466.0" x2="350.6" y2="469.5" stroke="#4a4a4a" stroke-width="1" /><line x1="360.4" y1="463.0" x2="360.4" y2="469.5" stroke="#4a4a4a" stroke-width="1" /><line x1="370.1" y1="466.0" x2="370.1" y2="469.5" stroke="#4a4a4a" stroke-width="1" /><line x1="379.9" y1="463.0" x2="379.9" y2="469.5" stroke="#4a4a4a" stroke-width="1" /><line x1="389.6" y1="466.0" x2="389.6" y2="469.5" stroke="#4a4a4a" stroke-width="1" /><line x1="399.4" y1="463.0" x2="399.4" y2="469.5" stroke="#4a4a4a" stroke-width="1" /><line x1="409.1" y1="466.0" x2="409.1" y2="469.5" stroke="#4a4a4a" stroke-width="1" /><line x1="418.9" y1="456.5" x2="418.9" y2="469.5" stroke="#4a4a4a" stroke-width="1.1" /><line x1="428.6" y1="466.0" x2="428.6" y2="469.5" stroke="#4a4a4a" stroke-width="1" /><line x1="438.4" y1="463.0" x2="438.4" y2="469.5" stroke="#4a4a4a" stroke-width="1" /><line x1="448.1" y1="466.0" x2="448.1" y2="469.5" stroke="#4a4a4a" stroke-width="1" /><line x1="457.9" y1="463.0" x2="457.9" y2="469.5" stroke="#4a4a4a" stroke-width="1" /><line x1="467.6" y1="466.0" x2="467.6" y2="469.5" stroke="#4a4a4a" stroke-width="1" /><line x1="477.4" y1="463.0" x2="477.4" y2="469.5" stroke="#4a4a4a" stroke-width="1" /><line x1="487.1" y1="466.0" x2="487.1" y2="469.5" stroke="#4a4a4a" stroke-width="1" /><line x1="496.9" y1="456.5" x2="496.9" y2="469.5" stroke="#4a4a4a" stroke-width="1.1" /><line x1="506.6" y1="466.0" x2="506.6" y2="469.5" stroke="#4a4a4a" stroke-width="1" /><line x1="516.4" y1="463.0" x2="516.4" y2="469.5" stroke="#4a4a4a" stroke-width="1" /><line x1="526.1" y1="466.0" x2="526.1" y2="469.5" stroke="#4a4a4a" stroke-width="1" /><line x1="535.9" y1="463.0" x2="535.9" y2="469.5" stroke="#4a4a4a" stroke-width="1" /><line x1="545.6" y1="466.0" x2="545.6" y2="469.5" stroke="#4a4a4a" stroke-width="1" /><line x1="555.4" y1="463.0" x2="555.4" y2="469.5" stroke="#4a4a4a" stroke-width="1" /><line x1="565.1" y1="466.0" x2="565.1" y2="469.5" stroke="#4a4a4a" stroke-width="1" /><line x1="574.9" y1="456.5" x2="574.9" y2="469.5" stroke="#4a4a4a" stroke-width="1.1" /><line x1="584.6" y1="466.0" x2="584.6" y2="469.5" stroke="#4a4a4a" stroke-width="1" /><line x1="594.4" y1="463.0" x2="594.4" y2="469.5" stroke="#4a4a4a" stroke-width="1" /><line x1="604.1" y1="466.0" x2="604.1" y2="469.5" stroke="#4a4a4a" stroke-width="1" /><line x1="613.9" y1="463.0" x2="613.9" y2="469.5" stroke="#4a4a4a" stroke-width="1" /><line x1="623.6" y1="466.0" x2="623.6" y2="469.5" stroke="#4a4a4a" stroke-width="1" /><line x1="633.4" y1="463.0" x2="633.4" y2="469.5" stroke="#4a4a4a" stroke-width="1" /><line x1="643.1" y1="466.0" x2="643.1" y2="469.5" stroke="#4a4a4a" stroke-width="1" /><line x1="652.9" y1="456.5" x2="652.9" y2="469.5" stroke="#4a4a4a" stroke-width="1.1" /><line x1="662.6" y1="466.0" x2="662.6" y2="469.5" stroke="#4a4a4a" stroke-width="1" /><line x1="672.4" y1="463.0" x2="672.4" y2="469.5" stroke="#4a4a4a" stroke-width="1" /><line x1="682.1" y1="466.0" x2="682.1" y2="469.5" stroke="#4a4a4a" stroke-width="1" /><line x1="691.9" y1="463.0" x2="691.9" y2="469.5" stroke="#4a4a4a" stroke-width="1" /><line x1="701.6" y1="466.0" x2="701.6" y2="469.5" stroke="#4a4a4a" stroke-width="1" /><line x1="711.4" y1="463.0" x2="711.4" y2="469.5" stroke="#4a4a4a" stroke-width="1" /><line x1="721.1" y1="466.0" x2="721.1" y2="469.5" stroke="#4a4a4a" stroke-width="1" /><line x1="730.9" y1="456.5" x2="730.9" y2="469.5" stroke="#4a4a4a" stroke-width="1.1" /><line x1="740.6" y1="466.0" x2="740.6" y2="469.5" stroke="#4a4a4a" stroke-width="1" /><line x1="750.4" y1="463.0" x2="750.4" y2="469.5" stroke="#4a4a4a" stroke-width="1" /><line x1="760.1" y1="466.0" x2="760.1" y2="469.5" stroke="#4a4a4a" stroke-width="1" /><line x1="769.9" y1="463.0" x2="769.9" y2="469.5" stroke="#4a4a4a" stroke-width="1" /><line x1="779.6" y1="466.0" x2="779.6" y2="469.5" stroke="#4a4a4a" stroke-width="1" /><line x1="789.4" y1="463.0" x2="789.4" y2="469.5" stroke="#4a4a4a" stroke-width="1" /><line x1="799.1" y1="466.0" x2="799.1" y2="469.5" stroke="#4a4a4a" stroke-width="1" /><line x1="808.9" y1="456.5" x2="808.9" y2="469.5" stroke="#4a4a4a" stroke-width="1.1" /><line x1="818.6" y1="466.0" x2="818.6" y2="469.5" stroke="#4a4a4a" stroke-width="1" /><line x1="828.4" y1="463.0" x2="828.4" y2="469.5" stroke="#4a4a4a" stroke-width="1" /><line x1="838.1" y1="466.0" x2="838.1" y2="469.5" stroke="#4a4a4a" stroke-width="1" /><line x1="847.9" y1="463.0" x2="847.9" y2="469.5" stroke="#4a4a4a" stroke-width="1" /><line x1="857.6" y1="466.0" x2="857.6" y2="469.5" stroke="#4a4a4a" stroke-width="1" /><line x1="867.4" y1="463.0" x2="867.4" y2="469.5" stroke="#4a4a4a" stroke-width="1" /><line x1="877.1" y1="466.0" x2="877.1" y2="469.5" stroke="#4a4a4a" stroke-width="1" /><line x1="886.9" y1="456.5" x2="886.9" y2="469.5" stroke="#4a4a4a" stroke-width="1.1" /><line x1="896.6" y1="466.0" x2="896.6" y2="469.5" stroke="#4a4a4a" stroke-width="1" /><line x1="906.4" y1="463.0" x2="906.4" y2="469.5" stroke="#4a4a4a" stroke-width="1" /><line x1="916.1" y1="466.0" x2="916.1" y2="469.5" stroke="#4a4a4a" stroke-width="1" /><line x1="925.9" y1="463.0" x2="925.9" y2="469.5" stroke="#4a4a4a" stroke-width="1" /><line x1="935.6" y1="466.0" x2="935.6" y2="469.5" stroke="#4a4a4a" stroke-width="1" /><line x1="945.4" y1="463.0" x2="945.4" y2="469.5" stroke="#4a4a4a" stroke-width="1" /><line x1="955.1" y1="466.0" x2="955.1" y2="469.5" stroke="#4a4a4a" stroke-width="1" /><line x1="964.9" y1="456.5" x2="964.9" y2="469.5" stroke="#4a4a4a" stroke-width="1.1" /><line x1="974.6" y1="466.0" x2="974.6" y2="469.5" stroke="#4a4a4a" stroke-width="1" /><line x1="984.4" y1="463.0" x2="984.4" y2="469.5" stroke="#4a4a4a" stroke-width="1" /><line x1="994.1" y1="466.0" x2="994.1" y2="469.5" stroke="#4a4a4a" stroke-width="1" /><line x1="1003.9" y1="463.0" x2="1003.9" y2="469.5" stroke="#4a4a4a" stroke-width="1" /><line x1="1013.6" y1="466.0" x2="1013.6" y2="469.5" stroke="#4a4a4a" stroke-width="1" /><line x1="1023.4" y1="463.0" x2="1023.4" y2="469.5" stroke="#4a4a4a" stroke-width="1" /><line x1="1033.2" y1="466.0" x2="1033.2" y2="469.5" stroke="#4a4a4a" stroke-width="1" /><line x1="1042.9" y1="456.5" x2="1042.9" y2="469.5" stroke="#4a4a4a" stroke-width="1.1" /><line x1="1052.7" y1="466.0" x2="1052.7" y2="469.5" stroke="#4a4a4a" stroke-width="1" /><line x1="1062.4" y1="463.0" x2="1062.4" y2="469.5" stroke="#4a4a4a" stroke-width="1" /><line x1="1072.2" y1="466.0" x2="1072.2" y2="469.5" stroke="#4a4a4a" stroke-width="1" /><line x1="1081.9" y1="463.0" x2="1081.9" y2="469.5" stroke="#4a4a4a" stroke-width="1" /><line x1="1091.7" y1="466.0" x2="1091.7" y2="469.5" stroke="#4a4a4a" stroke-width="1" /><line x1="1101.4" y1="463.0" x2="1101.4" y2="469.5" stroke="#4a4a4a" stroke-width="1" /><line x1="1111.2" y1="466.0" x2="1111.2" y2="469.5" stroke="#4a4a4a" stroke-width="1" /><line x1="1120.9" y1="456.5" x2="1120.9" y2="469.5" stroke="#4a4a4a" stroke-width="1.1" /><line x1="1130.7" y1="466.0" x2="1130.7" y2="469.5" stroke="#4a4a4a" stroke-width="1" /><line x1="1140.4" y1="463.0" x2="1140.4" y2="469.5" stroke="#4a4a4a" stroke-width="1" /><line x1="1150.2" y1="466.0" x2="1150.2" y2="469.5" stroke="#4a4a4a" stroke-width="1" /><line x1="1159.9" y1="463.0" x2="1159.9" y2="469.5" stroke="#4a4a4a" stroke-width="1" /><line x1="1169.7" y1="466.0" x2="1169.7" y2="469.5" stroke="#4a4a4a" stroke-width="1" /><line x1="1179.4" y1="463.0" x2="1179.4" y2="469.5" stroke="#4a4a4a" stroke-width="1" /><line x1="1189.2" y1="466.0" x2="1189.2" y2="469.5" stroke="#4a4a4a" stroke-width="1" /><line x1="1198.9" y1="456.5" x2="1198.9" y2="469.5" stroke="#4a4a4a" stroke-width="1.1" /><line x1="1208.7" y1="466.0" x2="1208.7" y2="469.5" stroke="#4a4a4a" stroke-width="1" /><line x1="1218.4" y1="463.0" x2="1218.4" y2="469.5" stroke="#4a4a4a" stroke-width="1" /><line x1="1228.2" y1="466.0" x2="1228.2" y2="469.5" stroke="#4a4a4a" stroke-width="1" /><line x1="1237.9" y1="463.0" x2="1237.9" y2="469.5" stroke="#4a4a4a" stroke-width="1" /><line x1="1247.7" y1="466.0" x2="1247.7" y2="469.5" stroke="#4a4a4a" stroke-width="1" /><line x1="1257.4" y1="463.0" x2="1257.4" y2="469.5" stroke="#4a4a4a" stroke-width="1" /><line x1="1267.2" y1="466.0" x2="1267.2" y2="469.5" stroke="#4a4a4a" stroke-width="1" /><line x1="1276.9" y1="456.5" x2="1276.9" y2="469.5" stroke="#4a4a4a" stroke-width="1.1" /><line x1="1286.7" y1="466.0" x2="1286.7" y2="469.5" stroke="#4a4a4a" stroke-width="1" /><line x1="1296.4" y1="463.0" x2="1296.4" y2="469.5" stroke="#4a4a4a" stroke-width="1" /><line x1="1306.2" y1="466.0" x2="1306.2" y2="469.5" stroke="#4a4a4a" stroke-width="1" /><line x1="1315.9" y1="463.0" x2="1315.9" y2="469.5" stroke="#4a4a4a" stroke-width="1" /><line x1="1325.7" y1="466.0" x2="1325.7" y2="469.5" stroke="#4a4a4a" stroke-width="1" /><line x1="1335.4" y1="463.0" x2="1335.4" y2="469.5" stroke="#4a4a4a" stroke-width="1" /><line x1="1345.2" y1="466.0" x2="1345.2" y2="469.5" stroke="#4a4a4a" stroke-width="1" /><line x1="1354.9" y1="456.5" x2="1354.9" y2="469.5" stroke="#4a4a4a" stroke-width="1.1" /><line x1="1364.7" y1="466.0" x2="1364.7" y2="469.5" stroke="#4a4a4a" stroke-width="1" /><line x1="1374.4" y1="463.0" x2="1374.4" y2="469.5" stroke="#4a4a4a" stroke-width="1" /><line x1="1384.2" y1="466.0" x2="1384.2" y2="469.5" stroke="#4a4a4a" stroke-width="1" /><line x1="1393.9" y1="463.0" x2="1393.9" y2="469.5" stroke="#4a4a4a" stroke-width="1" /><line x1="1403.7" y1="466.0" x2="1403.7" y2="469.5" stroke="#4a4a4a" stroke-width="1" /><line x1="1413.4" y1="463.0" x2="1413.4" y2="469.5" stroke="#4a4a4a" stroke-width="1" /><line x1="1423.2" y1="466.0" x2="1423.2" y2="469.5" stroke="#4a4a4a" stroke-width="1" /><line x1="1432.9" y1="456.5" x2="1432.9" y2="469.5" stroke="#4a4a4a" stroke-width="1.1" /><line x1="1442.7" y1="466.0" x2="1442.7" y2="469.5" stroke="#4a4a4a" stroke-width="1" /><line x1="1452.4" y1="463.0" x2="1452.4" y2="469.5" stroke="#4a4a4a" stroke-width="1" /><line x1="1462.2" y1="466.0" x2="1462.2" y2="469.5" stroke="#4a4a4a" stroke-width="1" /><line x1="1471.9" y1="463.0" x2="1471.9" y2="469.5" stroke="#4a4a4a" stroke-width="1" /><line x1="1481.7" y1="466.0" x2="1481.7" y2="469.5" stroke="#4a4a4a" stroke-width="1" /><line x1="1491.4" y1="463.0" x2="1491.4" y2="469.5" stroke="#4a4a4a" stroke-width="1" /><line x1="1501.2" y1="466.0" x2="1501.2" y2="469.5" stroke="#4a4a4a" stroke-width="1" /><line x1="1510.9" y1="456.5" x2="1510.9" y2="469.5" stroke="#4a4a4a" stroke-width="1.1" /><line x1="1520.7" y1="466.0" x2="1520.7" y2="469.5" stroke="#4a4a4a" stroke-width="1" /><line x1="1530.4" y1="463.0" x2="1530.4" y2="469.5" stroke="#4a4a4a" stroke-width="1" /><line x1="1540.2" y1="466.0" x2="1540.2" y2="469.5" stroke="#4a4a4a" stroke-width="1" /><line x1="1549.9" y1="463.0" x2="1549.9" y2="469.5" stroke="#4a4a4a" stroke-width="1" /><line x1="1559.7" y1="466.0" x2="1559.7" y2="469.5" stroke="#4a4a4a" stroke-width="1" /><line x1="1569.4" y1="463.0" x2="1569.4" y2="469.5" stroke="#4a4a4a" stroke-width="1" /><line x1="1579.2" y1="466.0" x2="1579.2" y2="469.5" stroke="#4a4a4a" stroke-width="1" /><line x1="1588.9" y1="456.5" x2="1588.9" y2="469.5" stroke="#4a4a4a" stroke-width="1.1" /><line x1="1598.7" y1="466.0" x2="1598.7" y2="469.5" stroke="#4a4a4a" stroke-width="1" /><line x1="1608.4" y1="463.0" x2="1608.4" y2="469.5" stroke="#4a4a4a" stroke-width="1" /><line x1="1618.2" y1="466.0" x2="1618.2" y2="469.5" stroke="#4a4a4a" stroke-width="1" /><line x1="1627.9" y1="463.0" x2="1627.9" y2="469.5" stroke="#4a4a4a" stroke-width="1" /><line x1="1637.7" y1="466.0" x2="1637.7" y2="469.5" stroke="#4a4a4a" stroke-width="1" /><line x1="1647.4" y1="463.0" x2="1647.4" y2="469.5" stroke="#4a4a4a" stroke-width="1" /><line x1="1657.2" y1="466.0" x2="1657.2" y2="469.5" stroke="#4a4a4a" stroke-width="1" /><line x1="1666.9" y1="456.5" x2="1666.9" y2="469.5" stroke="#4a4a4a" stroke-width="1.1" /><line x1="1676.7" y1="466.0" x2="1676.7" y2="469.5" stroke="#4a4a4a" stroke-width="1" /><line x1="1686.4" y1="463.0" x2="1686.4" y2="469.5" stroke="#4a4a4a" stroke-width="1" /><line x1="1696.2" y1="466.0" x2="1696.2" y2="469.5" stroke="#4a4a4a" stroke-width="1" /><line x1="1705.9" y1="463.0" x2="1705.9" y2="469.5" stroke="#4a4a4a" stroke-width="1" /><line x1="1715.7" y1="466.0" x2="1715.7" y2="469.5" stroke="#4a4a4a" stroke-width="1" /><line x1="1725.4" y1="463.0" x2="1725.4" y2="469.5" stroke="#4a4a4a" stroke-width="1" /><line x1="1735.2" y1="466.0" x2="1735.2" y2="469.5" stroke="#4a4a4a" stroke-width="1" /><line x1="1744.9" y1="456.5" x2="1744.9" y2="469.5" stroke="#4a4a4a" stroke-width="1.1" /><line x1="1754.7" y1="466.0" x2="1754.7" y2="469.5" stroke="#4a4a4a" stroke-width="1" /><line x1="1764.4" y1="463.0" x2="1764.4" y2="469.5" stroke="#4a4a4a" stroke-width="1" /><line x1="1774.2" y1="466.0" x2="1774.2" y2="469.5" stroke="#4a4a4a" stroke-width="1" /><line x1="1783.9" y1="463.0" x2="1783.9" y2="469.5" stroke="#4a4a4a" stroke-width="1" /><line x1="1793.7" y1="466.0" x2="1793.7" y2="469.5" stroke="#4a4a4a" stroke-width="1" /><line x1="1803.4" y1="463.0" x2="1803.4" y2="469.5" stroke="#4a4a4a" stroke-width="1" /><line x1="1813.2" y1="466.0" x2="1813.2" y2="469.5" stroke="#4a4a4a" stroke-width="1" /><line x1="1822.9" y1="456.5" x2="1822.9" y2="469.5" stroke="#4a4a4a" stroke-width="1.1" /><line x1="1832.7" y1="466.0" x2="1832.7" y2="469.5" stroke="#4a4a4a" stroke-width="1" /><line x1="1842.4" y1="463.0" x2="1842.4" y2="469.5" stroke="#4a4a4a" stroke-width="1" /><text x="89.7" y="487.0" fill="#2e2e74" font-size="11"  textLength="31.8" lengthAdjust="spacing">04/13</text><text x="167.7" y="487.0" fill="#2e2e74" font-size="11"  textLength="31.8" lengthAdjust="spacing">04/19</text><text x="245.7" y="487.0" fill="#2e2e74" font-size="11"  textLength="31.8" lengthAdjust="spacing">04/25</text><text x="323.7" y="487.0" fill="#2e2e74" font-size="11"  textLength="31.8" lengthAdjust="spacing">05/01</text><text x="401.7" y="487.0" fill="#2e2e74" font-size="11"  textLength="31.8" lengthAdjust="spacing">05/05</text><text x="479.7" y="487.0" fill="#2e2e74" font-size="11"  textLength="31.8" lengthAdjust="spacing">05/11</text><text x="557.7" y="487.0" fill="#2e2e74" font-size="11"  textLength="31.8" lengthAdjust="spacing">05/17</text><text x="635.7" y="487.0" fill="#2e2e74" font-size="11"  textLength="31.8" lengthAdjust="spacing">05/23</text><text x="713.7" y="487.0" fill="#2e2e74" font-size="11"  textLength="31.8" lengthAdjust="spacing">05/29</text><text x="791.7" y="487.0" fill="#2e2e74" font-size="11"  textLength="31.8" lengthAdjust="spacing">06/02</text><text x="869.7" y="487.0" fill="#2e2e74" font-size="11"  textLength="31.8" lengthAdjust="spacing">06/08</text><text x="947.7" y="487.0" fill="#2e2e74" font-size="11"  textLength="31.8" lengthAdjust="spacing">06/14</text><text x="1025.7" y="487.0" fill="#2e2e74" font-size="11"  textLength="31.8" lengthAdjust="spacing">06/20</text><text x="1103.7" y="487.0" fill="#2e2e74" font-size="11"  textLength="31.8" lengthAdjust="spacing">06/26</text><text x="1181.7" y="487.0" fill="#2e2e74" font-size="11"  textLength="31.8" lengthAdjust="spacing">06/30</text><text x="1259.7" y="487.0" fill="#2e2e74" font-size="11"  textLength="31.8" lengthAdjust="spacing">07/04</text><text x="1337.7" y="487.0" fill="#2e2e74" font-size="11"  textLength="31.8" lengthAdjust="spacing">07/08</text><text x="1415.7" y="487.0" fill="#2e2e74" font-size="11"  textLength="31.8" lengthAdjust="spacing">07/12</text><text x="1493.7" y="487.0" fill="#2e2e74" font-size="11"  textLength="31.8" lengthAdjust="spacing">07/16</text><text x="1571.7" y="487.0" fill="#2e2e74" font-size="11"  textLength="31.8" lengthAdjust="spacing">07/20</text><text x="1649.7" y="487.0" fill="#2e2e74" font-size="11"  textLength="31.8" lengthAdjust="spacing">07/24</text><text x="1727.7" y="487.0" fill="#2e2e74" font-size="11"  textLength="31.8" lengthAdjust="spacing">07/28</text><text x="1805.7" y="487.0" fill="#2e2e74" font-size="11"  textLength="31.8" lengthAdjust="spacing">08/01</text><rect x="2.0" y="474.0" width="69.0" height="16.0" fill="#ff9900" /><text x="2.5" y="487.0" fill="#000" font-size="11"  textLength="65.5" lengthAdjust="spacing">04/06/2017</text><rect x="2.0" y="495.0" width="1903.0" height="4.0" fill="#c2ccda" /><rect x="2.0" y="502.0" width="1831.0" height="1.0" fill="#c4d0e0" /><rect x="2.0" y="603.0" width="1831.0" height="1.0" fill="#c4d0e0" /><rect x="2.0" y="604.0" width="1831.0" height="1.0" fill="#e6e6ea" /><rect x="1832.0" y="502.0" width="1.0" height="102.0" fill="#c4d0e0" /><rect x="1847.0" y="503.0" width="1.0" height="101.0" fill="#4a4a4a" /><line x1="2.0" y1="508.5" x2="1833.0" y2="508.5" stroke="#000" stroke-width="1.3" /><line x1="2.0" y1="526.4" x2="1833.0" y2="526.4" stroke="#ff3030" stroke-width="1" /><line x1="2.0" y1="580.3" x2="1833.0" y2="580.3" stroke="#ff3030" stroke-width="1" /><line x1="2.0" y1="598.5" x2="1833.0" y2="598.5" stroke="#000" stroke-width="1.3" /><rect x="1843.5" y="504" width="4.5" height="1" fill="#4a4a4a"/><rect x="1833.5" y="508" width="14.5" height="1" fill="#4a4a4a"/><rect x="1843.5" y="512" width="4.5" height="1" fill="#4a4a4a"/><rect x="1843.5" y="517" width="4.5" height="1" fill="#4a4a4a"/><rect x="1843.5" y="522" width="4.5" height="1" fill="#4a4a4a"/><rect x="1843.5" y="526" width="4.5" height="1" fill="#4a4a4a"/><rect x="1840.5" y="530" width="7.5" height="1" fill="#4a4a4a"/><rect x="1843.5" y="535" width="4.5" height="1" fill="#4a4a4a"/><rect x="1843.5" y="540" width="4.5" height="1" fill="#4a4a4a"/><rect x="1843.5" y="544" width="4.5" height="1" fill="#4a4a4a"/><rect x="1843.5" y="548" width="4.5" height="1" fill="#4a4a4a"/><rect x="1833.5" y="553" width="14.5" height="1" fill="#4a4a4a"/><rect x="1843.5" y="558" width="4.5" height="1" fill="#4a4a4a"/><rect x="1843.5" y="562" width="4.5" height="1" fill="#4a4a4a"/><rect x="1843.5" y="566" width="4.5" height="1" fill="#4a4a4a"/><rect x="1843.5" y="571" width="4.5" height="1" fill="#4a4a4a"/><rect x="1840.5" y="576" width="7.5" height="1" fill="#4a4a4a"/><rect x="1843.5" y="580" width="4.5" height="1" fill="#4a4a4a"/><rect x="1843.5" y="584" width="4.5" height="1" fill="#4a4a4a"/><rect x="1843.5" y="589" width="4.5" height="1" fill="#4a4a4a"/><rect x="1843.5" y="594" width="4.5" height="1" fill="#4a4a4a"/><rect x="1833.5" y="598" width="14.5" height="1" fill="#4a4a4a"/><rect x="1850.0" y="504.0" width="21.0" height="12.0" fill="#a0a0a0" /><text x="1851.0" y="514.0" fill="#000" font-size="11" >100</text><rect x="1850.0" y="521.7" width="14.0" height="12.0" fill="#ff5555" /><text x="1851.0" y="531.5" fill="#000" font-size="11" >80</text><text x="1850.7" y="557.5" fill="#2e2e74" font-size="11"  textLength="30.8" lengthAdjust="spacing">50.00</text><rect x="1850.0" y="575.4" width="14.0" height="12.0" fill="#ff5555" /><text x="1851.0" y="585.5" fill="#000" font-size="11" >20</text><rect x="1850.0" y="593.3" width="7.0" height="12.0" fill="#a0a0a0" /><text x="1851.0" y="603.0" fill="#000" font-size="11" >0</text><polyline points="0.0,588.7 62.9,592.5 88.0,586.2 107.0,580.0 125.8,570.5 144.7,565.8 166.7,556.3 185.5,542.2 204.4,530.5 226.4,526.4 261.0,526.4 295.6,520.2 314.5,521.0 339.6,523.3 377.4,521.7 399.4,519.5 418.2,518.6 437.0,520.2 456.0,531.2 496.9,572.0 515.7,582.4 534.6,573.6 575.5,534.3 595.7,521.7 614.6,516.4 655.5,516.4 705.8,520.8 746.7,531.2 768.7,535.9 789.0,536.8 806.4,530.5 847.3,521.7 885.0,521.7 907.0,531.2 944.8,550.0 963.6,554.7 985.7,563.6 1003.0,568.0 1023.4,576.8 1042.3,578.3 1061.0,582.4 1080.0,583.7 1100.4,579.9 1120.9,575.2 1139.7,564.2" fill="none" stroke="#ff2020" stroke-width="1" stroke-linejoin="round" clip-path="url(#clp)" /><polyline points="0.0,589.3 62.0,594.0 66.0,591.9 86.5,577.4 108.5,569.8 144.7,562.0 184.0,525.5 204.4,524.0 223.3,528.6 245.3,528.6 264.0,521.7 283.0,518.6 302.0,521.0 339.6,524.0 358.5,519.5 380.5,521.7 399.4,518.0 418.2,516.4 437.1,525.5 478.0,580.0 496.9,588.7 515.7,577.4 534.6,557.9 556.6,532.7 575.5,517.6 611.4,515.4 624.0,515.4 655.5,517.0 690.0,521.7 712.0,523.3 749.8,539.0 775.0,535.9 789.0,535.0 809.6,522.7 828.4,524.9 847.3,515.4 869.3,519.5 888.2,526.4 907.0,540.6 926.0,550.0 944.8,555.7 963.6,559.5 984.0,573.0 1001.4,572.0 1023.4,582.1 1042.3,582.4 1061.0,585.3 1080.0,582.4 1100.4,572.0 1120.9,569.8 1139.7,549.0" fill="none" stroke="#2020e0" stroke-width="1" stroke-linejoin="round" clip-path="url(#clp)" /><text x="10.5" y="514.0" fill="#2020e0" font-size="11"  textLength="324.5" lengthAdjust="spacing">STOCHASTIC(EUR/USD, 10, 3, 3, MVA, MVA) -  K: 55.87</text><text x="344.3" y="514.0" fill="#ff2020" font-size="11"  textLength="48.2" lengthAdjust="spacing">D: 38.90</text><rect x="1120.3" y="585.6" width="39.5" height="18.0" fill="url(#lbl)" /><text x="1125.0" y="600.5" fill="#000" font-size="16"  textLength="29.4" lengthAdjust="spacing">Buy</text><rect x="2.0" y="606.0" width="1903.0" height="3.0" fill="#c2ccda" /><rect x="2.0" y="612.0" width="1831.0" height="1.0" fill="#c4d0e0" /><rect x="2.0" y="706.0" width="1831.0" height="1.0" fill="#c4d0e0" /><rect x="2.0" y="707.0" width="1831.0" height="1.0" fill="#e6e6ea" /><rect x="1832.0" y="612.0" width="1.0" height="95.0" fill="#c4d0e0" /><rect x="1847.0" y="613.0" width="1.0" height="94.0" fill="#4a4a4a" /><line x1="2.0" y1="684.5" x2="1847.0" y2="684.5" stroke="#000" stroke-width="1.3" /><rect x="1843.5" y="613" width="4.5" height="1" fill="#4a4a4a"/><rect x="1843.5" y="619" width="4.5" height="1" fill="#4a4a4a"/><rect x="1833.5" y="625" width="14.5" height="1" fill="#4a4a4a"/><rect x="1843.5" y="631" width="4.5" height="1" fill="#4a4a4a"/><rect x="1843.5" y="637" width="4.5" height="1" fill="#4a4a4a"/><rect x="1843.5" y="643" width="4.5" height="1" fill="#4a4a4a"/><rect x="1843.5" y="649" width="4.5" height="1" fill="#4a4a4a"/><rect x="1840.5" y="654" width="7.5" height="1" fill="#4a4a4a"/><rect x="1843.5" y="660" width="4.5" height="1" fill="#4a4a4a"/><rect x="1843.5" y="666" width="4.5" height="1" fill="#4a4a4a"/><rect x="1843.5" y="672" width="4.5" height="1" fill="#4a4a4a"/><rect x="1843.5" y="678" width="4.5" height="1" fill="#4a4a4a"/><rect x="1833.5" y="684" width="14.5" height="1" fill="#4a4a4a"/><rect x="1843.5" y="690" width="4.5" height="1" fill="#4a4a4a"/><rect x="1843.5" y="696" width="4.5" height="1" fill="#4a4a4a"/><rect x="1843.5" y="702" width="4.5" height="1" fill="#4a4a4a"/><text x="1850.3" y="629.5" fill="#2e2e74" font-size="11"  textLength="45.2" lengthAdjust="spacing">0.01000</text><text x="1850.3" y="688.5" fill="#2e2e74" font-size="11"  textLength="45.2" lengthAdjust="spacing">0.00000</text><rect x="3" y="684" width="13" height="16" fill="#000"/><rect x="22" y="684" width="13" height="17" fill="#000"/><rect x="42" y="684" width="13" height="17" fill="#000"/><rect x="61" y="684" width="13" height="15" fill="#000"/><rect x="81" y="684" width="13" height="11" fill="#000"/><rect x="100" y="684" width="13" height="10" fill="#000"/><rect x="120" y="684" width="13" height="8" fill="#000"/><rect x="139" y="684" width="13" height="6" fill="#000"/><rect x="159" y="683" width="13" height="2" fill="#000"/><rect x="178" y="680" width="13" height="5" fill="#000"/><rect x="198" y="677" width="13" height="8" fill="#000"/><rect x="217" y="676" width="13" height="9" fill="#000"/><rect x="237" y="670" width="13" height="15" fill="#000"/><rect x="256" y="663" width="13" height="22" fill="#000"/><rect x="276" y="661" width="13" height="24" fill="#000"/><rect x="295" y="663" width="13" height="22" fill="#000"/><rect x="315" y="664" width="13" height="21" fill="#000"/><rect x="334" y="667" width="13" height="18" fill="#000"/><rect x="354" y="668" width="13" height="17" fill="#000"/><rect x="373" y="673" width="13" height="12" fill="#000"/><rect x="393" y="673" width="13" height="12" fill="#000"/><rect x="412" y="674" width="13" height="11" fill="#000"/><rect x="432" y="678" width="13" height="7" fill="#000"/><rect x="451" y="683" width="13" height="2" fill="#000"/><rect x="471" y="684" width="13" height="2" fill="#000"/><rect x="490" y="684" width="13" height="7" fill="#000"/><rect x="510" y="684" width="13" height="7" fill="#000"/><rect x="529" y="684" width="13" height="3" fill="#000"/><rect x="549" y="682" width="13" height="3" fill="#000"/><rect x="568" y="675" width="13" height="10" fill="#000"/><rect x="588" y="673" width="13" height="12" fill="#000"/><rect x="607" y="668" width="13" height="17" fill="#000"/><rect x="627" y="664" width="13" height="21" fill="#000"/><rect x="646" y="666" width="13" height="19" fill="#000"/><rect x="666" y="668" width="13" height="17" fill="#000"/><rect x="685" y="672" width="13" height="13" fill="#000"/><rect x="705" y="677" width="13" height="8" fill="#000"/><rect x="724" y="682" width="13" height="3" fill="#000"/><rect x="744" y="684" width="13" height="2" fill="#000"/><rect x="763" y="684" width="13" height="2" fill="#000"/><rect x="783" y="684" width="13" height="3" fill="#000"/><rect x="802" y="684" width="13" height="3" fill="#000"/><rect x="822" y="684" width="13" height="3" fill="#000"/><rect x="841" y="684" width="13" height="3" fill="#000"/><rect x="861" y="684" width="13" height="4" fill="#000"/><rect x="880" y="684" width="13" height="6" fill="#000"/><rect x="900" y="684" width="13" height="9" fill="#000"/><rect x="919" y="684" width="13" height="12" fill="#000"/><rect x="939" y="684" width="13" height="13" fill="#000"/><rect x="958" y="684" width="13" height="13" fill="#000"/><rect x="978" y="684" width="13" height="16" fill="#000"/><rect x="997" y="684" width="13" height="15" fill="#000"/><rect x="1017" y="684" width="13" height="16" fill="#000"/><rect x="1036" y="684" width="13" height="16" fill="#000"/><rect x="1056" y="684" width="13" height="15" fill="#000"/><rect x="1075" y="684" width="13" height="14" fill="#000"/><rect x="1095" y="684" width="13" height="11" fill="#000"/><rect x="1114" y="684" width="13" height="9" fill="#000"/><rect x="1134" y="684" width="13" height="3" fill="#000"/><line x1="574.0" y1="644.9" x2="925.0" y2="683.6" stroke="#000" stroke-width="1" /><polyline points="2.1,680.7 21.0,684.4 41.9,689.5 64.6,693.4 75.5,693.0 96.4,692.8 113.2,694.3 122.4,695.3 135.8,695.3 146.8,694.5 160.0,690.7 175.2,687.9 197.2,685.0 217.6,683.5 223.9,682.4 238.0,675.3 250.6,669.8 260.0,665.0 277.4,659.6 299.4,654.9 323.0,651.7 346.5,648.3 381.0,647.3 393.7,644.7 417.3,640.4 428.3,640.4 440.9,641.5 492.8,653.4 519.2,653.4 553.2,645.8 574.0,637.4 594.7,633.6 632.5,621.7 668.3,618.5 700.4,618.5 726.8,622.8 745.7,624.2 779.6,624.7 799.4,623.6 818.3,625.1 852.3,626.6 869.2,628.9 903.2,637.4 941.0,644.0 965.5,646.8 984.3,652.5 1016.4,657.2 1041.0,663.8 1073.0,668.5 1110.8,670.0 1122.0,669.4 1140.0,666.2" fill="none" stroke="#ff2020" stroke-width="1" stroke-linejoin="round" clip-path="url(#clp)" /><polyline points="2.1,664.5 19.3,667.7 50.3,673.5 75.5,679.0 100.6,684.0 121.6,687.4 142.6,689.5 160.0,690.3 175.2,691.4 212.9,691.4 228.6,689.8 264.8,684.7 288.4,680.0 307.2,674.5 338.7,667.1 370.1,658.8 401.6,653.0 425.2,649.4 457.0,645.8 524.9,646.8 564.5,646.8 604.2,644.5 617.4,643.6 647.5,637.4 685.3,630.8 730.6,623.6 779.6,621.7 837.2,622.8 871.1,624.7 912.6,628.5 969.2,634.5 1016.4,643.0 1073.0,653.4 1120.2,661.3 1140.0,663.8" fill="none" stroke="#2020e0" stroke-width="1" stroke-linejoin="round" clip-path="url(#clp)" /><text x="10.5" y="624.0" fill="#ff2020" font-size="11"  textLength="298.5" lengthAdjust="spacing">MACD(EUR/USD.Close, 12, 26, 9) -  MACD: 0.00301</text><text x="318.2" y="624.0" fill="#2020e0" font-size="11"  textLength="98.5" lengthAdjust="spacing">SIGNAL: 0.00352</text><text x="425.2" y="624.0" fill="#000" font-size="11"  textLength="129.8" lengthAdjust="spacing">HISTOGRAM: -0.00051</text><rect x="1140.0" y="653.0" width="188.8" height="17.8" fill="url(#lbl)" /><text x="1145.4" y="667.5" fill="#000" font-size="16" xml:space="preserve" textLength="178.4" lengthAdjust="spacing">MACD Histogram  rise</text><rect x="2.0" y="709.0" width="1903.0" height="3.5" fill="#c2ccda" /><rect x="2.0" y="716.0" width="1831.0" height="1.0" fill="#c4d0e0" /><rect x="2.0" y="808.0" width="1831.0" height="1.0" fill="#c4d0e0" /><rect x="2.0" y="809.0" width="1831.0" height="1.0" fill="#e6e6ea" /><rect x="1832.0" y="716.0" width="1.0" height="93.0" fill="#c4d0e0" /><rect x="1847.0" y="717.0" width="1.0" height="92.0" fill="#4a4a4a" /><line x1="2.0" y1="722.3" x2="1833.0" y2="722.3" stroke="#000" stroke-width="1.3" /><line x1="2.0" y1="746.2" x2="1833.0" y2="746.2" stroke="#ff3030" stroke-width="1" /><line x1="2.0" y1="762.2" x2="1833.0" y2="762.2" stroke="#000" stroke-width="1.3" /><line x1="2.0" y1="779.3" x2="1833.0" y2="779.3" stroke="#ff3030" stroke-width="1" /><line x1="2.0" y1="803.4" x2="1833.0" y2="803.4" stroke="#000" stroke-width="1.3" /><rect x="1833.5" y="722" width="14.5" height="1" fill="#4a4a4a"/><rect x="1843.5" y="730" width="4.5" height="1" fill="#4a4a4a"/><rect x="1843.5" y="738" width="4.5" height="1" fill="#4a4a4a"/><rect x="1843.5" y="746" width="4.5" height="1" fill="#4a4a4a"/><rect x="1843.5" y="754" width="4.5" height="1" fill="#4a4a4a"/><rect x="1840.5" y="762" width="7.5" height="1" fill="#4a4a4a"/><rect x="1843.5" y="770" width="4.5" height="1" fill="#4a4a4a"/><rect x="1843.5" y="779" width="4.5" height="1" fill="#4a4a4a"/><rect x="1843.5" y="787" width="4.5" height="1" fill="#4a4a4a"/><rect x="1843.5" y="795" width="4.5" height="1" fill="#4a4a4a"/><rect x="1833.5" y="803" width="14.5" height="1" fill="#4a4a4a"/><rect x="1850.0" y="717.6" width="21.0" height="12.0" fill="#a0a0a0" /><text x="1851.0" y="727.5" fill="#000" font-size="11" >100</text><rect x="1850.0" y="740.9" width="14.0" height="12.0" fill="#ff5555" /><text x="1851.0" y="751.0" fill="#000" font-size="11" >70</text><rect x="1850.0" y="757.0" width="14.0" height="12.0" fill="#a0a0a0" /><text x="1851.0" y="767.0" fill="#000" font-size="11" >50</text><rect x="1850.0" y="774.0" width="14.0" height="12.0" fill="#ff5555" /><text x="1851.0" y="784.0" fill="#000" font-size="11" >30</text><rect x="1850.0" y="798.0" width="7.0" height="12.0" fill="#a0a0a0" /><text x="1851.0" y="808.0" fill="#000" font-size="11" >0</text><polyline points="0.0,766.3 28.3,771.0 62.9,769.5 86.5,763.2 103.8,767.0 125.8,767.9 151.0,762.5 165.0,757.5 182.4,759.1 220.0,758.5 242.0,750.0 264.0,745.3 301.9,751.5 346.0,749.7 361.6,747.5 380.5,753.1 399.4,748.1 416.7,746.8 440.3,755.3 456.0,758.5 496.9,759.1 515.7,754.7 553.5,747.5 572.3,744.3 594.2,749.0 614.6,745.3 631.9,744.3 653.9,749.0 671.2,746.8 690.0,748.1 708.9,751.5 731.0,752.2 749.8,750.6 768.7,748.1 789.1,751.5 809.6,748.4 828.4,750.6 847.3,749.7 863.0,751.2 885.0,755.3 907.0,757.5 926.0,755.9 954.2,755.9 963.6,754.7 984.0,762.5 1003.0,758.5 1023.4,762.5 1083.0,762.5 1102.0,759.4 1120.9,760.7 1139.7,752.8" fill="none" stroke="#e05018" stroke-width="1" stroke-linejoin="round" clip-path="url(#clp)" /><line x1="262.6" y1="743.4" x2="379.0" y2="748.4" stroke="#000" stroke-width="1" /><rect x="1033.0" y="762.0" width="14.0" height="2.0" fill="#000" /><rect x="1057.0" y="761.0" width="14.5" height="2.0" fill="#000" /><text x="10.5" y="728.0" fill="#e05018" font-size="11"  textLength="181.4" lengthAdjust="spacing">RSI(EUR/USD.Close, 14): 62.11</text><rect x="1140.0" y="739.3" width="70.7" height="17.3" fill="url(#lbl)" /><text x="1145.2" y="754.0" fill="#000" font-size="16"  textLength="60.3" lengthAdjust="spacing">RSI&gt;50</text><rect x="2.0" y="811.0" width="1903.0" height="3.0" fill="#c2ccda" /><rect x="2.0" y="817.0" width="1831.0" height="1.0" fill="#c4d0e0" /><rect x="2.0" y="908.0" width="1831.0" height="1.0" fill="#c4d0e0" /><rect x="2.0" y="909.0" width="1831.0" height="1.0" fill="#e6e6ea" /><rect x="1832.0" y="817.0" width="1.0" height="92.0" fill="#c4d0e0" /><rect x="1847.0" y="818.0" width="1.0" height="91.0" fill="#4a4a4a" /><line x1="2.0" y1="835.3" x2="1832.0" y2="835.3" stroke="#8890c0" stroke-width="1" /><rect x="1843.5" y="822" width="4.5" height="1" fill="#4a4a4a"/><rect x="1840.5" y="828" width="7.5" height="1" fill="#4a4a4a"/><rect x="1843.5" y="834" width="4.5" height="1" fill="#4a4a4a"/><rect x="1843.5" y="840" width="4.5" height="1" fill="#4a4a4a"/><rect x="1843.5" y="846" width="4.5" height="1" fill="#4a4a4a"/><rect x="1843.5" y="853" width="4.5" height="1" fill="#4a4a4a"/><rect x="1833.5" y="859" width="14.5" height="1" fill="#4a4a4a"/><rect x="1843.5" y="865" width="4.5" height="1" fill="#4a4a4a"/><rect x="1843.5" y="871" width="4.5" height="1" fill="#4a4a4a"/><rect x="1843.5" y="877" width="4.5" height="1" fill="#4a4a4a"/><rect x="1843.5" y="884" width="4.5" height="1" fill="#4a4a4a"/><rect x="1840.5" y="890" width="7.5" height="1" fill="#4a4a4a"/><rect x="1843.5" y="896" width="4.5" height="1" fill="#4a4a4a"/><rect x="1843.5" y="902" width="4.5" height="1" fill="#4a4a4a"/><rect x="1847.8" y="827.8" width="47.7" height="14.6" fill="#8890c0" /><text x="1848.9" y="838.8" fill="#000" font-size="11"  textLength="45.0" lengthAdjust="spacing">34.7321</text><text x="1850.3" y="863.0" fill="#2e2e74" font-size="11"  textLength="45.2" lengthAdjust="spacing">25.0000</text><polyline points="0.0,869.2 28.3,862.2 47.2,861.3 84.9,867.9 107.0,873.2 125.8,873.2 144.7,876.4 166.7,881.7 204.4,886.4 223.3,880.2 242.1,888.0 279.9,894.3 314.5,896.8 346.0,899.0 380.5,899.3 399.4,901.5 415.0,902.5 440.3,896.8 457.6,886.4 474.8,885.2 493.7,884.2 515.7,887.4 553.5,893.7 580.0,896.2 611.4,900.6 642.9,903.1 674.3,903.1 691.6,904.1 710.5,897.5 729.4,898.4 749.8,888.3 768.7,890.5 806.4,894.6 847.3,897.5 866.2,891.2 885.0,890.5 907.0,885.2 944.8,886.4 963.6,890.5 985.7,878.0 1003.0,880.2 1023.4,883.6 1042.3,878.9 1080.0,882.7 1120.9,887.4 1139.7,891.2" fill="none" stroke="#e05018" stroke-width="1" stroke-linejoin="round" clip-path="url(#clp)" /><polyline points="0.0,868.5 47.2,877.3 84.9,867.0 107.0,869.2 125.8,870.0 144.7,862.2 166.7,852.2 184.0,855.3 204.4,848.7 223.3,853.4 242.1,823.9 261.0,823.9 279.9,832.4 301.9,839.3 339.6,846.5 361.6,848.1 379.0,851.2 399.4,846.5 418.2,848.1 437.1,856.0 459.0,860.0 495.3,865.4 515.7,859.7 534.6,850.3 553.5,832.4 575.5,825.1 595.7,830.8 614.6,831.4 631.9,828.6 653.9,834.9 672.8,839.3 691.6,836.4 712.0,842.4 731.0,844.9 749.8,851.2 768.7,847.1 789.1,849.7 809.6,848.7 847.3,855.0 885.0,863.8 907.0,868.5 944.8,872.3 965.2,859.7 985.7,865.4 1003.0,869.2 1023.4,870.7 1042.3,872.3 1061.0,873.9 1080.0,873.2 1100.4,867.9 1120.9,867.0 1139.7,857.5" fill="none" stroke="#20b0c0" stroke-width="1" stroke-linejoin="round" clip-path="url(#clp)" /><text x="10.5" y="829.0" fill="#20b0c0" font-size="11"  textLength="223.8" lengthAdjust="spacing">VTDMI(EUR/USD, 14) -  DI+: 25.67139</text><text x="243.7" y="829.0" fill="#e05018" font-size="11"  textLength="79.6" lengthAdjust="spacing">DI-: 12.19955</text><rect x="1178.5" y="865.5" width="132.0" height="19.0" fill="url(#lbl)" stroke="#000" stroke-width="1"/><text x="1184.9" y="881.0" fill="#000" font-size="16"  textLength="119.0" lengthAdjust="spacing">+ IDM &gt; - IDM</text><text x="1592.2" y="872.0" fill="#c2c2c2" font-size="19"  textLength="156.5" lengthAdjust="spacing">Activate Windows</text><text x="1592.2" y="893.0" fill="#c0c0c0" font-size="14"  textLength="235.2" lengthAdjust="spacing">Go to Settings to activate Windows.</text><rect x="2.0" y="911.0" width="1903.0" height="3.0" fill="#c2ccda" /><rect x="2.0" y="917.0" width="1831.0" height="1.0" fill="#c4d0e0" /><rect x="1832.0" y="917.0" width="1.0" height="3.0" fill="#c4d0e0" /><line x1="1847.5" y1="918.0" x2="1847.5" y2="920.0" stroke="#4a4a4a" stroke-width="1" /></svg></body></html>
